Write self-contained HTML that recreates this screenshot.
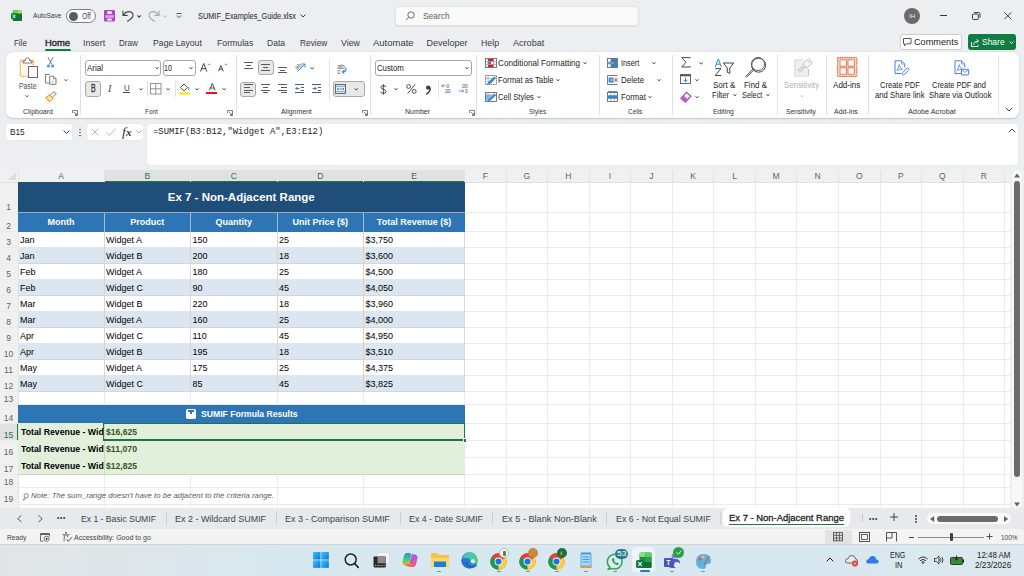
<!DOCTYPE html><html><head><meta charset="utf-8"><style>
*{margin:0;padding:0;box-sizing:border-box}
html,body{width:1024px;height:576px;overflow:hidden;background:#eceef1;font-family:"Liberation Sans",sans-serif;position:relative}
.a{position:absolute}
.t{position:absolute;white-space:nowrap;line-height:0;height:0}
.t>span{display:inline-block}
svg{position:absolute;overflow:visible}
</style></head><body>
<svg style="left:10.5px;top:10.3px" width="11" height="11" viewBox="0 0 11 11"><rect x="1.8" y="0" width="9.2" height="11" rx="1" fill="#1b6f35"/><rect x="1.8" y="0" width="4.6" height="3.5" rx="0.6" fill="#5fd45a"/><rect x="6.4" y="0" width="4.6" height="3.5" rx="0.6" fill="#a8e05a"/><rect x="0" y="3.2" width="6" height="6" rx="0.7" fill="#0f7a38"/><path d="M1.5 4.6 L4.5 8 M4.5 4.6 L1.5 8" stroke="#fff" stroke-width="0.9"/></svg>
<div class="t" style="left:32.50px;top:16px;font-size:8px;color:#3b3b3b;font-weight:normal;font-family:'Liberation Sans', sans-serif;transform:scaleX(0.8201);transform-origin:0 0;">AutoSave</div>
<div class="a" style="left:66px;top:9px;width:30px;height:14px;border:1px solid #7d7d7d;border-radius:7px;background:#fff"></div>
<div class="a" style="left:68.5px;top:11.5px;width:9px;height:9px;border-radius:50%;background:#5c5c5c"></div>
<div class="t" style="left:82.00px;top:16px;font-size:8.5px;color:#4a4a4a;font-weight:normal;font-family:'Liberation Sans', sans-serif;transform:scaleX(0.8000);transform-origin:0 0;">Off</div>
<svg style="left:104px;top:10px" width="11" height="11.5" viewBox="0 0 11 11.5"><rect x="0" y="0" width="11" height="11.5" rx="1.2" fill="#b146c2"/><rect x="3.3" y="1.3" width="4.4" height="2.6" fill="#fff"/><rect x="1.3" y="5.2" width="8.4" height="2.6" fill="#dba6e6"/><rect x="3.3" y="8.6" width="4.4" height="2" fill="#fff"/></svg>
<svg style="left:122px;top:10px" width="12" height="12" viewBox="0 0 12 12"><path d="M1 0.8 V5.4 H5.6" fill="none" stroke="#424242" stroke-width="1.1"/><path d="M1.3 5.2 Q3.5 1.5 7.2 1.6 Q11 2 11 5.6 Q10.8 8 5.2 11.5" fill="none" stroke="#424242" stroke-width="1.1"/></svg>
<svg style="left:137.3px;top:14.5px" width="4.2" height="2.8" viewBox="0 0 4.2 2.8"><path d="M0.4 0.4 L2.1 2.3 L3.8 0.4" fill="none" stroke="#424242" stroke-width="1.1"/></svg>
<svg style="left:148px;top:10px" width="12" height="12" viewBox="0 0 12 12"><path d="M11 0.8 V5.4 H6.4" fill="none" stroke="#a8a8a8" stroke-width="1.1"/><path d="M10.7 5.2 Q8.5 1.5 4.8 1.6 Q1 2 1 5.6 Q1.2 8 6.8 11.5" fill="none" stroke="#a8a8a8" stroke-width="1.1"/></svg>
<svg style="left:163px;top:14.5px" width="4.2" height="2.8" viewBox="0 0 4.2 2.8"><path d="M0.4 0.4 L2.1 2.3 L3.8 0.4" fill="none" stroke="#b8b8b8" stroke-width="1"/></svg>
<svg style="left:176px;top:13px" width="6" height="6" viewBox="0 0 6 6"><path d="M0.5 0.5 H5.5" stroke="#424242" stroke-width="0.9"/><path d="M0.8 2.5 L3 4.7 L5.2 2.5" fill="none" stroke="#424242" stroke-width="0.9"/></svg>
<div class="t" style="left:197.80px;top:16.3px;font-size:8.5px;color:#242424;font-weight:normal;font-family:'Liberation Sans', sans-serif;transform:scaleX(0.8664);transform-origin:0 0;">SUMIF_Examples_Guide.xlsx</div>
<svg style="left:299.6px;top:14px" width="6" height="4" viewBox="0 0 6 4"><path d="M0.5 0.5 L3 3 L5.5 0.5" fill="none" stroke="#424242" stroke-width="1"/></svg>
<div class="a" style="left:394.6px;top:5.6px;width:244.6px;height:20.6px;border-radius:4px;background:#fafafa;border:1px solid #e2e3e6;box-shadow:0 1px 1px rgba(0,0,0,0.08)"></div>
<svg style="left:405px;top:11px" width="10" height="10" viewBox="0 0 10 10"><circle cx="6" cy="4" r="3.2" fill="none" stroke="#616161" stroke-width="0.9"/><path d="M3.7 6.3 L0.8 9.2" stroke="#616161" stroke-width="0.9"/></svg>
<div class="t" style="left:422.50px;top:15.6px;font-size:9px;color:#616161;font-weight:normal;font-family:'Liberation Sans', sans-serif;transform:scaleX(0.9333);transform-origin:0 0;">Search</div>
<div class="a" style="left:904px;top:8px;width:16px;height:16px;border-radius:50%;background:#6e6966"></div>
<div class="t" style="left:909.00px;top:16px;font-size:6px;color:#f0f0f0;font-weight:normal;font-family:'Liberation Sans', sans-serif;transform:scaleX(1.0167);transform-origin:0 0;">IH</div>
<div class="a" style="left:940.4px;top:15px;width:6.8px;height:1px;background:#333"></div>
<svg style="left:972px;top:12px" width="8.5" height="8" viewBox="0 0 8.5 8"><rect x="0.5" y="2" width="5.8" height="5.5" rx="1" fill="none" stroke="#333" stroke-width="0.95"/><path d="M2.2 0.5 H6.5 Q8 0.5 8 2 V5.8" fill="none" stroke="#333" stroke-width="0.95"/></svg>
<svg style="left:1004.2px;top:12.2px" width="7.6" height="7.6" viewBox="0 0 7.6 7.6"><path d="M0.4 0.4 L7.2 7.2 M7.2 0.4 L0.4 7.2" stroke="#333" stroke-width="0.95"/></svg>
<div class="t" style="left:14.20px;top:42.8px;font-size:9px;color:#3b3b3b;font-weight:normal;font-family:'Liberation Sans', sans-serif;transform:scaleX(0.8828);transform-origin:0 0;">File</div>
<div class="t" style="left:45.00px;top:42.8px;font-size:9px;color:#242424;font-weight:normal;-webkit-text-stroke:0.35px #242424;font-family:'Liberation Sans', sans-serif;transform:scaleX(1.0417);transform-origin:0 0;">Home</div>
<div class="t" style="left:82.80px;top:42.8px;font-size:9px;color:#3b3b3b;font-weight:normal;font-family:'Liberation Sans', sans-serif;transform:scaleX(0.9867);transform-origin:0 0;">Insert</div>
<div class="t" style="left:119.40px;top:42.8px;font-size:9px;color:#3b3b3b;font-weight:normal;font-family:'Liberation Sans', sans-serif;transform:scaleX(0.8988);transform-origin:0 0;">Draw</div>
<div class="t" style="left:153.30px;top:42.8px;font-size:9px;color:#3b3b3b;font-weight:normal;font-family:'Liberation Sans', sans-serif;transform:scaleX(0.9663);transform-origin:0 0;">Page Layout</div>
<div class="t" style="left:216.60px;top:42.8px;font-size:9px;color:#3b3b3b;font-weight:normal;font-family:'Liberation Sans', sans-serif;transform:scaleX(0.9680);transform-origin:0 0;">Formulas</div>
<div class="t" style="left:266.60px;top:42.8px;font-size:9px;color:#3b3b3b;font-weight:normal;font-family:'Liberation Sans', sans-serif;transform:scaleX(0.9455);transform-origin:0 0;">Data</div>
<div class="t" style="left:299.50px;top:42.8px;font-size:9px;color:#3b3b3b;font-weight:normal;font-family:'Liberation Sans', sans-serif;transform:scaleX(0.9244);transform-origin:0 0;">Review</div>
<div class="t" style="left:340.80px;top:42.8px;font-size:9px;color:#3b3b3b;font-weight:normal;font-family:'Liberation Sans', sans-serif;transform:scaleX(0.9795);transform-origin:0 0;">View</div>
<div class="t" style="left:372.90px;top:42.8px;font-size:9px;color:#3b3b3b;font-weight:normal;font-family:'Liberation Sans', sans-serif;transform:scaleX(1.0545);transform-origin:0 0;">Automate</div>
<div class="t" style="left:426.50px;top:42.8px;font-size:9px;color:#3b3b3b;font-weight:normal;font-family:'Liberation Sans', sans-serif;transform:scaleX(1.0000);transform-origin:0 0;">Developer</div>
<div class="t" style="left:481.30px;top:42.8px;font-size:9px;color:#3b3b3b;font-weight:normal;font-family:'Liberation Sans', sans-serif;transform:scaleX(0.9730);transform-origin:0 0;">Help</div>
<div class="t" style="left:512.80px;top:42.8px;font-size:9px;color:#3b3b3b;font-weight:normal;font-family:'Liberation Sans', sans-serif;transform:scaleX(1.0065);transform-origin:0 0;">Acrobat</div>
<div class="a" style="left:45px;top:49px;width:26px;height:2px;background:#107c41;border-radius:1px"></div>
<div class="a" style="left:900.2px;top:34.3px;width:62px;height:15.4px;border:1px solid #cdcdcd;border-radius:3px;background:#fff"></div>
<svg style="left:903px;top:38px" width="8.5" height="8.5" viewBox="0 0 8.5 8.5"><path d="M0.5 0.5 H8 V5.8 H3.5 L1.5 7.8 V5.8 H0.5 Z" fill="none" stroke="#424242" stroke-width="0.9"/></svg>
<div class="t" style="left:913.70px;top:42.3px;font-size:9px;color:#242424;font-weight:normal;font-family:'Liberation Sans', sans-serif;transform:scaleX(1.0184);transform-origin:0 0;">Comments</div>
<div class="a" style="left:968.1px;top:34.3px;width:47.9px;height:15.4px;border-radius:3px;background:#107c41"></div>
<svg style="left:970.7px;top:37.5px" width="9" height="9" viewBox="0 0 9 9"><path d="M0.5 4 V8.5 H7 V6.8" fill="none" stroke="#fff" stroke-width="0.9"/><path d="M2.5 6.8 Q2.8 3.2 7 3 M5.6 1.2 L7.6 3 L5.6 4.8" fill="none" stroke="#fff" stroke-width="0.9"/></svg>
<div class="t" style="left:982.00px;top:42.3px;font-size:9px;color:#fff;font-weight:normal;font-family:'Liberation Sans', sans-serif;transform:scaleX(0.9417);transform-origin:0 0;">Share</div>
<svg style="left:1009px;top:41px" width="5" height="3" viewBox="0 0 5 3"><path d="M0.5 0.5 L2.5 2.5 L4.5 0.5" fill="none" stroke="#fff" stroke-width="0.9"/></svg>
<div class="a" style="left:5.5px;top:52px;width:1013px;height:66px;background:#fff;border-radius:7px;box-shadow:0 0.5px 1.5px rgba(0,0,0,0.18)"></div>
<div class="a" style="left:79.5px;top:55px;width:1px;height:60px;background:#e1e1e1"></div>
<div class="a" style="left:235.5px;top:55px;width:1px;height:60px;background:#e1e1e1"></div>
<div class="a" style="left:369.5px;top:55px;width:1px;height:60px;background:#e1e1e1"></div>
<div class="a" style="left:476px;top:55px;width:1px;height:60px;background:#e1e1e1"></div>
<div class="a" style="left:599px;top:55px;width:1px;height:60px;background:#e1e1e1"></div>
<div class="a" style="left:671.5px;top:55px;width:1px;height:60px;background:#e1e1e1"></div>
<div class="a" style="left:777px;top:55px;width:1px;height:60px;background:#e1e1e1"></div>
<div class="a" style="left:826px;top:55px;width:1px;height:60px;background:#e1e1e1"></div>
<div class="a" style="left:867.5px;top:55px;width:1px;height:60px;background:#e1e1e1"></div>
<div class="a" style="left:997.5px;top:55px;width:1px;height:60px;background:#e1e1e1"></div>
<div class="t" style="left:23.00px;top:112px;font-size:8px;color:#333333;font-weight:normal;font-family:'Liberation Sans', sans-serif;transform:scaleX(0.8759);transform-origin:0 0;">Clipboard</div>
<div class="t" style="left:144.80px;top:112px;font-size:8px;color:#333333;font-weight:normal;font-family:'Liberation Sans', sans-serif;transform:scaleX(0.8000);transform-origin:0 0;">Font</div>
<div class="t" style="left:281.00px;top:112px;font-size:8px;color:#333333;font-weight:normal;font-family:'Liberation Sans', sans-serif;transform:scaleX(0.8648);transform-origin:0 0;">Alignment</div>
<div class="t" style="left:404.90px;top:112px;font-size:8px;color:#333333;font-weight:normal;font-family:'Liberation Sans', sans-serif;transform:scaleX(0.8842);transform-origin:0 0;">Number</div>
<div class="t" style="left:528.70px;top:112px;font-size:8px;color:#333333;font-weight:normal;font-family:'Liberation Sans', sans-serif;transform:scaleX(0.7816);transform-origin:0 0;">Styles</div>
<div class="t" style="left:627.70px;top:112px;font-size:8px;color:#333333;font-weight:normal;font-family:'Liberation Sans', sans-serif;transform:scaleX(0.8056);transform-origin:0 0;">Cells</div>
<div class="t" style="left:712.90px;top:112px;font-size:8px;color:#333333;font-weight:normal;font-family:'Liberation Sans', sans-serif;transform:scaleX(0.8510);transform-origin:0 0;">Editing</div>
<div class="t" style="left:786.00px;top:112px;font-size:8px;color:#333333;font-weight:normal;font-family:'Liberation Sans', sans-serif;transform:scaleX(0.8278);transform-origin:0 0;">Sensitivity</div>
<div class="t" style="left:834.00px;top:112px;font-size:8px;color:#333333;font-weight:normal;font-family:'Liberation Sans', sans-serif;transform:scaleX(0.8807);transform-origin:0 0;">Add-ins</div>
<div class="t" style="left:908.00px;top:112px;font-size:8px;color:#333333;font-weight:normal;font-family:'Liberation Sans', sans-serif;transform:scaleX(0.9105);transform-origin:0 0;">Adobe Acrobat</div>
<svg style="left:72px;top:110px" width="6" height="6" viewBox="0 0 6 6"><path d="M0.5 3 V0.5 H5.5 V5.5 H3" fill="none" stroke="#616161" stroke-width="0.8"/><path d="M2 2 L5 5 M5 3 V5 H3" fill="none" stroke="#616161" stroke-width="0.8"/></svg>
<svg style="left:227px;top:110px" width="6" height="6" viewBox="0 0 6 6"><path d="M0.5 3 V0.5 H5.5 V5.5 H3" fill="none" stroke="#616161" stroke-width="0.8"/><path d="M2 2 L5 5 M5 3 V5 H3" fill="none" stroke="#616161" stroke-width="0.8"/></svg>
<svg style="left:362px;top:110px" width="6" height="6" viewBox="0 0 6 6"><path d="M0.5 3 V0.5 H5.5 V5.5 H3" fill="none" stroke="#616161" stroke-width="0.8"/><path d="M2 2 L5 5 M5 3 V5 H3" fill="none" stroke="#616161" stroke-width="0.8"/></svg>
<svg style="left:469px;top:110px" width="6" height="6" viewBox="0 0 6 6"><path d="M0.5 3 V0.5 H5.5 V5.5 H3" fill="none" stroke="#616161" stroke-width="0.8"/><path d="M2 2 L5 5 M5 3 V5 H3" fill="none" stroke="#616161" stroke-width="0.8"/></svg>
<svg style="left:19px;top:57px" width="20" height="21" viewBox="0 0 20 21"><rect x="1.3" y="3.3" width="13" height="16" rx="1" fill="#fffaf0" stroke="#f59d1a" stroke-width="1.1" stroke-dasharray="1.6 0.5"/><path d="M4 6 V4 H6 Q6.3 0.8 8.5 0.8 Q10.7 0.8 11 4 H13 V6 Z" fill="#fff" stroke="#6b6b6b" stroke-width="0.9"/><rect x="9.5" y="9.5" width="9" height="11" fill="#f8f8f8" stroke="#6b6b6b" stroke-width="1"/></svg>
<div class="t" style="left:18.50px;top:86.2px;font-size:8.5px;color:#505050;font-weight:normal;font-family:'Liberation Sans', sans-serif;transform:scaleX(0.8046);transform-origin:0 0;">Paste</div>
<svg style="left:24.9px;top:94.9px" width="4" height="2.20" viewBox="0 0 4 2.20"><path d="M0.5 0.5 L2.00 1.70 L3.50 0.5" fill="none" stroke="#505050" stroke-width="1"/></svg>
<svg style="left:46px;top:57px" width="9" height="11" viewBox="0 0 9 11"><path d="M2 0.3 L5.8 7.5 M7 0.3 L3.2 7.5" stroke="#6b6b6b" stroke-width="0.9"/><circle cx="2.4" cy="9" r="1.5" fill="#3a96dd"/><circle cx="6.6" cy="9" r="1.5" fill="#3a96dd"/></svg>
<svg style="left:44.5px;top:74px" width="12" height="11" viewBox="0 0 12 11"><path d="M4.7 9 H0.5 V0.5 H4.7" fill="#fff" stroke="#6b6b6b" stroke-width="0.9"/><path d="M4.7 2.2 H8.5 L11 4.7 V10.3 H4.7 Z" fill="#fff" stroke="#6b6b6b" stroke-width="0.9"/><path d="M8.5 2.2 V4.7 H11" fill="none" stroke="#6b6b6b" stroke-width="0.7"/><rect x="6.5" y="7" width="2" height="1.5" fill="#bbb"/></svg>
<svg style="left:64.4px;top:78.8px" width="4" height="2.20" viewBox="0 0 4 2.20"><path d="M0.5 0.5 L2.00 1.70 L3.50 0.5" fill="none" stroke="#505050" stroke-width="1"/></svg>
<svg style="left:44.5px;top:91px" width="12" height="11" viewBox="0 0 12 11"><path d="M1 6.8 L4.8 3.6 L8 7.4 L4.2 10.4 Z" fill="#fff" stroke="#f59d1a" stroke-width="1.2"/><path d="M2.8 8.4 L6.2 5.2" stroke="#f59d1a" stroke-width="0.8"/><path d="M5.6 3.6 L9.2 0.6 L11.2 2.8 L7.6 6" fill="#fff" stroke="#6b6b6b" stroke-width="0.9"/></svg>
<div class="a" style="left:85px;top:59.5px;width:75.5px;height:16px;border:1px solid #a8a8a8;border-radius:3px;background:#fff"></div>
<div class="t" style="left:86.60px;top:68px;font-size:8.5px;color:#242424;font-weight:normal;font-family:'Liberation Sans', sans-serif;transform:scaleX(0.9471);transform-origin:0 0;">Arial</div>
<svg style="left:155px;top:66.9px" width="4" height="2.20" viewBox="0 0 4 2.20"><path d="M0.5 0.5 L2.00 1.70 L3.50 0.5" fill="none" stroke="#424242" stroke-width="1"/></svg>
<div class="a" style="left:162.5px;top:59.5px;width:33px;height:16px;border:1px solid #a8a8a8;border-radius:3px;background:#fff"></div>
<div class="t" style="left:164.40px;top:68px;font-size:8.5px;color:#242424;font-weight:normal;font-family:'Liberation Sans', sans-serif;transform:scaleX(0.8211);transform-origin:0 0;">10</div>
<svg style="left:189.4px;top:66.9px" width="4" height="2.20" viewBox="0 0 4 2.20"><path d="M0.5 0.5 L2.00 1.70 L3.50 0.5" fill="none" stroke="#424242" stroke-width="1"/></svg>
<svg style="left:200px;top:62.5px" width="8" height="9" viewBox="0 0 8 9"><path d="M0.5 8.5 L3.7 0.5 L6.9 8.5 M1.7 5.7 H5.7" fill="none" stroke="#424242" stroke-width="1"/></svg>
<svg style="left:206.8px;top:62.8px" width="4" height="3" viewBox="0 0 4 3"><path d="M0.5 2.3 L2 0.8 L3.5 2.3" fill="none" stroke="#2b88d8" stroke-width="0.8"/></svg>
<svg style="left:218.2px;top:64.8px" width="6" height="7" viewBox="0 0 6 7"><path d="M0.5 6.3 L2.9 0.5 L5.3 6.3 M1.4 4.2 H4.4" fill="none" stroke="#424242" stroke-width="0.95"/></svg>
<svg style="left:223.6px;top:62.8px" width="4" height="3" viewBox="0 0 4 3"><path d="M0.5 0.7 L2 2.2 L3.5 0.7" fill="none" stroke="#2b88d8" stroke-width="0.8"/></svg>
<div class="a" style="left:85px;top:81px;width:16px;height:16px;border:1px solid #a9a9a9;border-radius:3px;background:#e8e8e8"></div>
<div class="t" style="left:90.70px;top:89.3px;font-size:10px;color:#333;font-weight:normal;-webkit-text-stroke:0.3px #333;font-family:'Liberation Sans', sans-serif;transform:scaleX(0.6963);transform-origin:0 0;">B</div>
<div class="t" style="left:108.06px;top:88.6px;font-size:10px;color:#424242;font-weight:normal;font-style:italic;font-family:'Liberation Serif', serif;transform:scaleX(1.0250);transform-origin:0 0;">I</div>
<div class="t" style="left:123.60px;top:88.3px;font-size:9.5px;color:#424242;font-weight:normal;font-family:'Liberation Sans', sans-serif;transform:scaleX(0.8296);transform-origin:0 0;">U</div>
<div class="a" style="left:123.3px;top:92.4px;width:6.7px;height:0.9px;background:#424242"></div>
<svg style="left:138.5px;top:87.9px" width="4.2" height="2.31" viewBox="0 0 4.2 2.31"><path d="M0.5 0.5 L2.10 1.81 L3.70 0.5" fill="none" stroke="#424242" stroke-width="1"/></svg>
<div class="a" style="left:146.5px;top:81px;width:1px;height:16px;background:#e1e1e1"></div>
<svg style="left:150px;top:83px" width="12" height="12" viewBox="0 0 12 12"><rect x="0.5" y="0.5" width="10.5" height="10.5" fill="none" stroke="#8a8a8a" stroke-width="0.9"/><path d="M5.75 0.5 V11 M0.5 5.75 H11" stroke="#8a8a8a" stroke-width="0.9"/></svg>
<svg style="left:166.2px;top:87.9px" width="4.2" height="2.31" viewBox="0 0 4.2 2.31"><path d="M0.5 0.5 L2.10 1.81 L3.70 0.5" fill="none" stroke="#424242" stroke-width="1"/></svg>
<div class="a" style="left:175px;top:81px;width:1px;height:16px;background:#e1e1e1"></div>
<svg style="left:179px;top:82px" width="12" height="13" viewBox="0 0 12 13"><path d="M1.5 5.5 L5 2 L8.5 5.5 L5 9 Z" fill="#fff" stroke="#424242" stroke-width="0.9"/><path d="M9 5 Q10.5 6.5 9.8 8" fill="none" stroke="#2b88d8" stroke-width="1"/><rect x="0" y="10.5" width="11" height="2" fill="#ffe600"/></svg>
<svg style="left:195.1px;top:87.9px" width="4.2" height="2.31" viewBox="0 0 4.2 2.31"><path d="M0.5 0.5 L2.10 1.81 L3.70 0.5" fill="none" stroke="#424242" stroke-width="1"/></svg>
<svg style="left:208.6px;top:83.4px" width="7" height="8" viewBox="0 0 7 8"><path d="M0.5 7.2 L3.3 0.4 L6.1 7.2 M1.5 5 H5.1" fill="none" stroke="#424242" stroke-width="0.95"/></svg>
<div class="a" style="left:206px;top:91.6px;width:11px;height:2.6px;background:#e81123"></div>
<svg style="left:222.3px;top:87.9px" width="4.2" height="2.31" viewBox="0 0 4.2 2.31"><path d="M0.5 0.5 L2.10 1.81 L3.70 0.5" fill="none" stroke="#424242" stroke-width="1"/></svg>
<div class="a" style="left:244px;top:62.0px;width:9px;height:1px;background:#5a5a5a"></div>
<div class="a" style="left:246px;top:64.85px;width:5px;height:1px;background:#5a5a5a"></div>
<div class="a" style="left:244px;top:67.7px;width:9px;height:1px;background:#5a5a5a"></div>
<div class="a" style="left:257.5px;top:59.7px;width:16px;height:15.8px;border:1px solid #a9a9a9;border-radius:3px;background:#e8e8e8"></div>
<div class="a" style="left:261px;top:64.0px;width:9px;height:1px;background:#5a5a5a"></div>
<div class="a" style="left:263px;top:66.9px;width:5px;height:1px;background:#5a5a5a"></div>
<div class="a" style="left:261px;top:69.8px;width:9px;height:1px;background:#5a5a5a"></div>
<div class="a" style="left:278px;top:66.8px;width:9px;height:1px;background:#5a5a5a"></div>
<div class="a" style="left:280px;top:69.55px;width:5px;height:1px;background:#5a5a5a"></div>
<div class="a" style="left:278px;top:72.3px;width:9px;height:1px;background:#5a5a5a"></div>
<svg style="left:294px;top:61px" width="12" height="12" viewBox="0 0 12 12"><text x="0.5" y="8" font-size="6.5" fill="#6b6b6b" font-family="Liberation Sans" transform="rotate(-40 3.5 5.5)">ab</text><path d="M3.5 10.5 L10.5 3.5 M7.5 3 H11 V6.5" fill="none" stroke="#2b88d8" stroke-width="1"/></svg>
<svg style="left:309.5px;top:66.5px" width="4.5" height="2.48" viewBox="0 0 4.5 2.48"><path d="M0.5 0.5 L2.25 1.98 L4.00 0.5" fill="none" stroke="#424242" stroke-width="1"/></svg>
<div class="a" style="left:240.2px;top:81.5px;width:16.3px;height:15.5px;border:1px solid #a9a9a9;border-radius:3px;background:#e8e8e8"></div>
<div class="a" style="left:244px;top:84.2px;width:9px;height:1px;background:#5a5a5a"></div>
<div class="a" style="left:244px;top:86.9px;width:6px;height:1px;background:#5a5a5a"></div>
<div class="a" style="left:244px;top:89.60000000000001px;width:9px;height:1px;background:#5a5a5a"></div>
<div class="a" style="left:244px;top:92.30000000000001px;width:6px;height:1px;background:#5a5a5a"></div>
<div class="a" style="left:261px;top:84.2px;width:9px;height:1px;background:#5a5a5a"></div>
<div class="a" style="left:263px;top:86.9px;width:5px;height:1px;background:#5a5a5a"></div>
<div class="a" style="left:261px;top:89.60000000000001px;width:9px;height:1px;background:#5a5a5a"></div>
<div class="a" style="left:263px;top:92.30000000000001px;width:5px;height:1px;background:#5a5a5a"></div>
<div class="a" style="left:278px;top:84.2px;width:9px;height:1px;background:#5a5a5a"></div>
<div class="a" style="left:281px;top:86.9px;width:6px;height:1px;background:#5a5a5a"></div>
<div class="a" style="left:278px;top:89.60000000000001px;width:9px;height:1px;background:#5a5a5a"></div>
<div class="a" style="left:281px;top:92.30000000000001px;width:6px;height:1px;background:#5a5a5a"></div>
<div class="a" style="left:295px;top:84.2px;width:9px;height:1px;background:#5a5a5a"></div>
<div class="a" style="left:301px;top:86.9px;width:3px;height:1px;background:#5a5a5a"></div>
<div class="a" style="left:301px;top:89.60000000000001px;width:3px;height:1px;background:#5a5a5a"></div>
<div class="a" style="left:295px;top:92.30000000000001px;width:9px;height:1px;background:#5a5a5a"></div>
<svg style="left:295px;top:86px" width="5" height="5" viewBox="0 0 5 5"><path d="M4.5 2.5 H0.8 M2.3 1 L0.8 2.5 L2.3 4" fill="none" stroke="#2b88d8" stroke-width="1"/></svg>
<div class="a" style="left:312px;top:84.2px;width:9px;height:1px;background:#5a5a5a"></div>
<div class="a" style="left:318px;top:86.9px;width:3px;height:1px;background:#5a5a5a"></div>
<div class="a" style="left:318px;top:89.60000000000001px;width:3px;height:1px;background:#5a5a5a"></div>
<div class="a" style="left:312px;top:92.30000000000001px;width:9px;height:1px;background:#5a5a5a"></div>
<svg style="left:312px;top:86px" width="5" height="5" viewBox="0 0 5 5"><path d="M0.5 2.5 H4.2 M2.7 1 L4.2 2.5 L2.7 4" fill="none" stroke="#2b88d8" stroke-width="1"/></svg>
<div class="a" style="left:328.5px;top:59px;width:1px;height:42px;background:#e1e1e1"></div>
<svg style="left:336.5px;top:62.5px" width="11" height="11" viewBox="0 0 11 11"><text x="0.2" y="5.6" font-size="6.8" fill="#5a5a5a" font-family="Liberation Sans">ab</text><text x="0.2" y="10.6" font-size="6.8" fill="#5a5a5a" font-family="Liberation Sans">c</text><path d="M8.8 4.6 Q9.8 9 5.6 9 M7.2 7.4 L5.5 9 L7.2 10.6" fill="none" stroke="#2b88d8" stroke-width="1.1"/></svg>
<div class="a" style="left:333px;top:81px;width:31.5px;height:16px;border:1px solid #a9a9a9;border-radius:3px;background:#e8e8e8"></div>
<svg style="left:335px;top:83.5px" width="11" height="10" viewBox="0 0 11 10"><rect x="0.5" y="0.5" width="10" height="9" fill="#cfe4fa" stroke="#5a5a5a" stroke-width="0.9"/><path d="M0.5 2.8 H10.5 M0.5 7.2 H10.5" stroke="#5a5a5a" stroke-width="0.6"/><rect x="1" y="3.2" width="9" height="3.6" fill="#fff"/><path d="M2 5 H9 M3.4 3.8 L2 5 L3.4 6.2 M7.6 3.8 L9 5 L7.6 6.2" fill="none" stroke="#2b88d8" stroke-width="0.9"/></svg>
<svg style="left:354px;top:88.3px" width="4.5" height="2.48" viewBox="0 0 4.5 2.48"><path d="M0.5 0.5 L2.25 1.98 L4.00 0.5" fill="none" stroke="#424242" stroke-width="1"/></svg>
<div class="a" style="left:375px;top:60px;width:96.5px;height:15.5px;border:1px solid #a8a8a8;border-radius:3px;background:#fff"></div>
<div class="t" style="left:376.90px;top:68.2px;font-size:8.5px;color:#242424;font-weight:normal;font-family:'Liberation Sans', sans-serif;transform:scaleX(0.9162);transform-origin:0 0;">Custom</div>
<svg style="left:465.4px;top:67px" width="4" height="2.20" viewBox="0 0 4 2.20"><path d="M0.5 0.5 L2.00 1.70 L3.50 0.5" fill="none" stroke="#424242" stroke-width="1"/></svg>
<svg style="left:380px;top:83.5px" width="7" height="11" viewBox="0 0 7 11"><path d="M5.8 3.2 Q5.6 1.6 3.4 1.6 Q1 1.6 1 3.4 Q1 4.8 3.4 5.4 Q6 6 6 7.6 Q6 9.4 3.4 9.4 Q1 9.4 0.8 7.6" fill="none" stroke="#424242" stroke-width="0.95"/><path d="M3.4 0.2 V10.8" stroke="#424242" stroke-width="0.9"/></svg>
<svg style="left:394px;top:88px" width="4" height="2.20" viewBox="0 0 4 2.20"><path d="M0.5 0.5 L2.00 1.70 L3.50 0.5" fill="none" stroke="#424242" stroke-width="1"/></svg>
<svg style="left:405.5px;top:84px" width="11" height="10" viewBox="0 0 11 10"><circle cx="2.6" cy="2.5" r="1.9" fill="none" stroke="#424242" stroke-width="0.95"/><circle cx="8.2" cy="7.4" r="1.9" fill="none" stroke="#424242" stroke-width="0.95"/><path d="M9.2 0.4 L1.6 9.6" stroke="#424242" stroke-width="0.95"/></svg>
<svg style="left:424.5px;top:84.5px" width="6" height="10" viewBox="0 0 6 10"><circle cx="3.2" cy="2.6" r="2.2" fill="#424242"/><path d="M5.2 2.8 Q5.6 7 1.2 9.2" fill="none" stroke="#424242" stroke-width="1.4"/></svg>
<div class="a" style="left:437.5px;top:81px;width:1px;height:16px;background:#e1e1e1"></div>
<svg style="left:441px;top:83px" width="11" height="11" viewBox="0 0 11 11"><text x="5.5" y="4.5" font-size="4.8" fill="#424242" font-family="Liberation Sans">0</text><text x="3" y="10" font-size="4.8" fill="#424242" font-family="Liberation Sans">.00</text><path d="M4.8 2.8 H0.6 M2.2 1.2 L0.6 2.8 L2.2 4.4" fill="none" stroke="#2b88d8" stroke-width="0.8"/></svg>
<svg style="left:458px;top:83px" width="11" height="11" viewBox="0 0 11 11"><text x="3" y="4.5" font-size="4.8" fill="#424242" font-family="Liberation Sans">.00</text><text x="7" y="10" font-size="4.8" fill="#424242" font-family="Liberation Sans">0</text><path d="M0.6 8 H5.6 M4 6.4 L5.6 8 L4 9.6" fill="none" stroke="#2b88d8" stroke-width="0.8"/></svg>
<svg style="left:485px;top:57.5px" width="12" height="10" viewBox="0 0 12 10"><rect x="0.5" y="0.5" width="11" height="9" fill="#fff" stroke="#6b6b6b" stroke-width="0.9"/><rect x="3" y="1" width="5.5" height="2.5" fill="#e81123"/><rect x="3" y="4" width="3" height="2" fill="#2b88d8"/><rect x="3" y="6.5" width="5.5" height="2.5" fill="#e81123"/><path d="M3 0.5 V9.5 M8.7 0.5 V9.5 M0.5 3.7 H11.5 M0.5 6.3 H11.5" stroke="#8a8a8a" stroke-width="0.6"/></svg>
<div class="t" style="left:498.00px;top:62.9px;font-size:8.5px;color:#242424;font-weight:normal;font-family:'Liberation Sans', sans-serif;transform:scaleX(0.9602);transform-origin:0 0;">Conditional Formatting</div>
<svg style="left:583.4px;top:61.8px" width="4" height="2.20" viewBox="0 0 4 2.20"><path d="M0.5 0.5 L2.00 1.70 L3.50 0.5" fill="none" stroke="#424242" stroke-width="1"/></svg>
<svg style="left:485px;top:74.8px" width="12" height="10" viewBox="0 0 12 10"><rect x="0.5" y="0.5" width="11" height="9" fill="#fff" stroke="#6b6b6b" stroke-width="0.9" stroke-dasharray="1.5 0.7"/><path d="M3 0.5 V9.5 M0.5 3.3 H11.5" stroke="#8a8a8a" stroke-width="0.6"/><path d="M2 9.5 L3.5 6.5 L9 2 L10.5 3.5 L6 8.5 Z" fill="#2b88d8"/><path d="M9 1.5 L11 3.5" stroke="#6b6b6b" stroke-width="1"/></svg>
<div class="t" style="left:498.00px;top:79.7px;font-size:8.5px;color:#242424;font-weight:normal;font-family:'Liberation Sans', sans-serif;transform:scaleX(0.9136);transform-origin:0 0;">Format as Table</div>
<svg style="left:556px;top:78.6px" width="4" height="2.20" viewBox="0 0 4 2.20"><path d="M0.5 0.5 L2.00 1.70 L3.50 0.5" fill="none" stroke="#424242" stroke-width="1"/></svg>
<svg style="left:485px;top:91.8px" width="12" height="10" viewBox="0 0 12 10"><rect x="0.5" y="0.5" width="11" height="9" fill="#fff" stroke="#6b6b6b" stroke-width="0.9"/><path d="M0.5 2.8 H11.5 M3 0.5 V9.5" stroke="#8a8a8a" stroke-width="0.6"/><path d="M1 9 V3 H8 Z" fill="#7fb8ee"/><path d="M2 9.5 L3.5 7 L9 2.2 L10.5 3.7 L5.5 8.5 Z" fill="#2b88d8"/><path d="M9 1.7 L11 3.7" stroke="#6b6b6b" stroke-width="1"/></svg>
<div class="t" style="left:498.00px;top:96.9px;font-size:8.5px;color:#242424;font-weight:normal;font-family:'Liberation Sans', sans-serif;transform:scaleX(0.8944);transform-origin:0 0;">Cell Styles</div>
<svg style="left:537px;top:95.5px" width="4" height="2.20" viewBox="0 0 4 2.20"><path d="M0.5 0.5 L2.00 1.70 L3.50 0.5" fill="none" stroke="#424242" stroke-width="1"/></svg>
<svg style="left:607px;top:57.5px" width="11" height="10" viewBox="0 0 11 10"><rect x="0.5" y="0.5" width="10" height="9" fill="#fff" stroke="#6b6b6b" stroke-width="0.9"/><rect x="4" y="1" width="6" height="8" fill="#2b88d8"/><path d="M4 0.5 V9.5 M7.2 0.5 V9.5 M0.5 5 H10.5" stroke="#6b6b6b" stroke-width="0.6"/><path d="M7.5 5 H1.3 M3 3.3 L1.3 5 L3 6.7" fill="none" stroke="#2b88d8" stroke-width="1"/><path d="M4.5 5 H7" stroke="#fff" stroke-width="0.6"/></svg>
<div class="t" style="left:621.00px;top:62.9px;font-size:8.5px;color:#242424;font-weight:normal;font-family:'Liberation Sans', sans-serif;transform:scaleX(0.8605);transform-origin:0 0;">Insert</div>
<svg style="left:651.8px;top:61.8px" width="4" height="2.20" viewBox="0 0 4 2.20"><path d="M0.5 0.5 L2.00 1.70 L3.50 0.5" fill="none" stroke="#424242" stroke-width="1"/></svg>
<svg style="left:607px;top:74.8px" width="11" height="10" viewBox="0 0 11 10"><path d="M0.5 0.5 H10.5 M0.5 9.5 H10.5 M0.5 0.5 V9.5" fill="none" stroke="#6b6b6b" stroke-width="0.9"/><path d="M0.5 3 H10.5 M0.5 7 H10.5" stroke="#9a9a9a" stroke-width="0.6"/><circle cx="4" cy="5" r="2.6" fill="#2b88d8"/><path d="M2.5 5 H5.5" stroke="#fff" stroke-width="0.8"/><path d="M7.3 3.5 L10.3 6.5 M10.3 3.5 L7.3 6.5" stroke="#e81123" stroke-width="0.9"/></svg>
<div class="t" style="left:621.00px;top:79.7px;font-size:8.5px;color:#242424;font-weight:normal;font-family:'Liberation Sans', sans-serif;transform:scaleX(0.9388);transform-origin:0 0;">Delete</div>
<svg style="left:656.6px;top:78.6px" width="4" height="2.20" viewBox="0 0 4 2.20"><path d="M0.5 0.5 L2.00 1.70 L3.50 0.5" fill="none" stroke="#424242" stroke-width="1"/></svg>
<svg style="left:607px;top:91.4px" width="11" height="11" viewBox="0 0 11 11"><rect x="0.5" y="1.5" width="10" height="9" fill="#fff" stroke="#6b6b6b" stroke-width="0.9"/><path d="M3.8 1.5 V10.5 M7.2 1.5 V10.5 M0.5 4.5 H10.5 M0.5 7.5 H10.5" stroke="#8a8a8a" stroke-width="0.6"/><rect x="1" y="4.5" width="9" height="3" fill="#2b88d8"/><path d="M1 0.5 H10" stroke="#2b88d8" stroke-width="0.9"/></svg>
<div class="t" style="left:621.00px;top:96.9px;font-size:8.5px;color:#242424;font-weight:normal;font-family:'Liberation Sans', sans-serif;transform:scaleX(0.9222);transform-origin:0 0;">Format</div>
<svg style="left:648.4px;top:95.5px" width="4" height="2.20" viewBox="0 0 4 2.20"><path d="M0.5 0.5 L2.00 1.70 L3.50 0.5" fill="none" stroke="#424242" stroke-width="1"/></svg>
<svg style="left:680.5px;top:57px" width="10" height="11" viewBox="0 0 10 11"><path d="M9.2 1.4 V0.6 H0.8 L5 5.3 L0.8 10 H9.2 V9.2" fill="none" stroke="#424242" stroke-width="0.95" stroke-linejoin="miter"/></svg>
<svg style="left:698.6px;top:61.6px" width="4.5" height="2.48" viewBox="0 0 4.5 2.48"><path d="M0.5 0.5 L2.25 1.98 L4.00 0.5" fill="none" stroke="#424242" stroke-width="1"/></svg>
<svg style="left:680px;top:74.3px" width="11" height="10" viewBox="0 0 11 10"><rect x="0.5" y="0.5" width="10" height="9" fill="#fff" stroke="#5a5a5a" stroke-width="0.9"/><rect x="0.5" y="0.5" width="10" height="1.8" fill="#5a5a5a"/><path d="M5.5 3.5 V7.8 M3.6 5.9 L5.5 7.8 L7.4 5.9" fill="none" stroke="#2b88d8" stroke-width="1"/></svg>
<svg style="left:694.8px;top:78.7px" width="4" height="2.20" viewBox="0 0 4 2.20"><path d="M0.5 0.5 L2.00 1.70 L3.50 0.5" fill="none" stroke="#424242" stroke-width="1"/></svg>
<svg style="left:679.5px;top:90.8px" width="12" height="12" viewBox="0 0 12 12"><path d="M1 7.2 L6.6 1.3 L10.8 5.2 L5.2 11 Z" fill="#fff" stroke="#b146c2" stroke-width="1.3"/><path d="M1 7.2 L3.6 4.5 L7.7 8.3 L5.2 11 Z" fill="#c25ad4"/></svg>
<svg style="left:694.8px;top:95.6px" width="4" height="2.20" viewBox="0 0 4 2.20"><path d="M0.5 0.5 L2.00 1.70 L3.50 0.5" fill="none" stroke="#424242" stroke-width="1"/></svg>
<svg style="left:714px;top:57.5px" width="22" height="19" viewBox="0 0 22 19"><path d="M1.2 9 L4.3 0.8 L7.4 9 M2.3 6.2 H6.3" fill="none" stroke="#2b88d8" stroke-width="1"/><path d="M1.3 10.6 H7 L1.2 17.5 H7.2" fill="none" stroke="#424242" stroke-width="1"/><path d="M9.3 5 H19.8 L15.8 10 V15.4 L13.3 14.4 V10 Z" fill="none" stroke="#424242" stroke-width="1" stroke-linejoin="round"/></svg>
<svg style="left:744.5px;top:56.5px" width="22" height="22" viewBox="0 0 22 22"><circle cx="13.6" cy="8.2" r="7" fill="none" stroke="#424242" stroke-width="1"/><path d="M8.6 13.2 L1.2 20.6" stroke="#424242" stroke-width="1"/></svg>
<div class="t" style="left:713.00px;top:84.8px;font-size:8.5px;color:#242424;font-weight:normal;font-family:'Liberation Sans', sans-serif;transform:scaleX(0.9474);transform-origin:0 0;">Sort &amp;</div>
<div class="t" style="left:712.00px;top:95.3px;font-size:8.5px;color:#242424;font-weight:normal;font-family:'Liberation Sans', sans-serif;transform:scaleX(0.9053);transform-origin:0 0;">Filter</div>
<svg style="left:733.4px;top:94px" width="4" height="2.20" viewBox="0 0 4 2.20"><path d="M0.5 0.5 L2.00 1.70 L3.50 0.5" fill="none" stroke="#424242" stroke-width="1"/></svg>
<svg style="left:744px;top:56px" width="22" height="22" viewBox="0 0 22 22"><circle cx="14" cy="8" r="6.5" fill="none" stroke="#616161" stroke-width="1"/><path d="M9.5 12.5 L1.5 20.5" stroke="#616161" stroke-width="1"/></svg>
<div class="t" style="left:744.10px;top:84.8px;font-size:8.5px;color:#242424;font-weight:normal;font-family:'Liberation Sans', sans-serif;transform:scaleX(0.9374);transform-origin:0 0;">Find &amp;</div>
<div class="t" style="left:741.90px;top:95.3px;font-size:8.5px;color:#242424;font-weight:normal;font-family:'Liberation Sans', sans-serif;transform:scaleX(0.8632);transform-origin:0 0;">Select</div>
<svg style="left:766px;top:94px" width="4" height="2.20" viewBox="0 0 4 2.20"><path d="M0.5 0.5 L2.00 1.70 L3.50 0.5" fill="none" stroke="#424242" stroke-width="1"/></svg>
<svg style="left:793.5px;top:57px" width="20" height="20" viewBox="0 0 20 20"><path d="M1 3 H9 M1 3 V19 H14.5 V12" fill="none" stroke="#c4c4c4" stroke-width="1"/><rect x="1.5" y="3.5" width="12.5" height="15" fill="#efefef"/><path d="M4 14 L10 8 M5.5 15.5 L11.5 9.5" stroke="#c0c0c0" stroke-width="1.6" stroke-dasharray="1 0.6"/><path d="M9 7 L14.5 1.5 L18.5 5.5 L13 11 Z" fill="#f4f4f4" stroke="#c4c4c4" stroke-width="1"/><circle cx="15" cy="4.8" r="0.9" fill="#c4c4c4"/></svg>
<div class="t" style="left:783.75px;top:84.8px;font-size:8.5px;color:#b0b0b0;font-weight:normal;font-family:'Liberation Sans', sans-serif;transform:scaleX(0.9190);transform-origin:0 0;">Sensitivity</div>
<svg style="left:799.8px;top:94.5px" width="4" height="2.20" viewBox="0 0 4 2.20"><path d="M0.5 0.5 L2.00 1.70 L3.50 0.5" fill="none" stroke="#c0c0c0" stroke-width="1"/></svg>
<svg style="left:836.5px;top:57.3px" width="21" height="20" viewBox="0 0 21 20"><rect x="0.6" y="0.6" width="19.2" height="18.8" rx="0.5" fill="#fbe3d6" stroke="#e86a3f" stroke-width="1.1" stroke-dasharray="1.4 0.4"/><rect x="3" y="2.8" width="6.4" height="6.4" fill="#fff" stroke="#e86a3f" stroke-width="0.9"/><rect x="11" y="2.8" width="6.4" height="6.4" fill="#fff" stroke="#e86a3f" stroke-width="0.9"/><rect x="3" y="10.8" width="6.4" height="6.4" fill="#fff" stroke="#e86a3f" stroke-width="0.9"/><rect x="11" y="10.8" width="6.4" height="6.4" fill="#fff" stroke="#e86a3f" stroke-width="0.9"/></svg>
<div class="t" style="left:833.40px;top:84.8px;font-size:8.5px;color:#242424;font-weight:normal;font-family:'Liberation Sans', sans-serif;transform:scaleX(0.9496);transform-origin:0 0;">Add-ins</div>
<svg style="left:893.8px;top:60.3px" width="16" height="16" viewBox="0 0 16 16"><path d="M7.5 13.5 H1 V0.8 H7.5 L10.7 4 V7.5" fill="#fff" stroke="#4a7ee6" stroke-width="1"/><path d="M7.5 0.8 V4 H10.7" fill="none" stroke="#4a7ee6" stroke-width="0.7"/><path d="M3 10.5 Q4.6 8.2 5.2 4.6 Q5.8 8 8.4 9.2 Q5.5 9 3 10.5 Z" fill="none" stroke="#4a7ee6" stroke-width="0.8"/><path d="M8.8 12.6 L12.6 8.4 Q13.8 7.4 14.6 8.4 Q15.3 9.4 14.3 10.4 L10.5 14.6 Q9.4 15.6 8.6 14.7 Q7.9 13.8 8.8 12.6 Z" fill="#fff" stroke="#4a7ee6" stroke-width="1"/></svg>
<svg style="left:954.3px;top:60.3px" width="16" height="16" viewBox="0 0 16 16"><path d="M7.5 13.5 H1 V0.8 H7.5 L10.7 4 V7.5" fill="#fff" stroke="#4a7ee6" stroke-width="1"/><path d="M7.5 0.8 V4 H10.7" fill="none" stroke="#4a7ee6" stroke-width="0.7"/><path d="M3 10.5 Q4.6 8.2 5.2 4.6 Q5.8 8 8.4 9.2 Q5.5 9 3 10.5 Z" fill="none" stroke="#4a7ee6" stroke-width="0.8"/><rect x="7.5" y="9.3" width="7.2" height="5.6" rx="0.6" fill="#fff" stroke="#4a7ee6" stroke-width="1"/><path d="M7.8 9.8 L11.1 12.4 L14.4 9.8" fill="none" stroke="#4a7ee6" stroke-width="0.8"/></svg>
<div class="t" style="left:879.60px;top:84.9px;font-size:8.5px;color:#242424;font-weight:normal;font-family:'Liberation Sans', sans-serif;transform:scaleX(0.8872);transform-origin:0 0;">Create PDF</div>
<div class="t" style="left:874.70px;top:95.2px;font-size:8.5px;color:#242424;font-weight:normal;font-family:'Liberation Sans', sans-serif;transform:scaleX(0.9119);transform-origin:0 0;">and Share link</div>
<div class="t" style="left:932.40px;top:84.9px;font-size:8.5px;color:#242424;font-weight:normal;font-family:'Liberation Sans', sans-serif;transform:scaleX(0.8764);transform-origin:0 0;">Create PDF and</div>
<div class="t" style="left:928.60px;top:95.2px;font-size:8.5px;color:#242424;font-weight:normal;font-family:'Liberation Sans', sans-serif;transform:scaleX(0.9269);transform-origin:0 0;">Share via Outlook</div>
<svg style="left:1005px;top:107px" width="8" height="5" viewBox="0 0 8 5"><path d="M0.7 0.7 L4 4 L7.3 0.7" fill="none" stroke="#424242" stroke-width="1"/></svg>
<div class="a" style="left:6px;top:124px;width:66px;height:15.5px;background:#fff;border-radius:3px;box-shadow:0 0 0 0.5px #e4e4e4"></div>
<div class="t" style="left:9.50px;top:132px;font-size:8.5px;color:#242424;font-weight:normal;font-family:'Liberation Sans', sans-serif;transform:scaleX(0.9667);transform-origin:0 0;">B15</div>
<svg style="left:63px;top:130px" width="7" height="4" viewBox="0 0 7 4"><path d="M0.6 0.6 L3.5 3.4 L6.4 0.6" fill="none" stroke="#424242" stroke-width="1"/></svg>
<div class="a" style="left:79px;top:128.5px;width:1.5px;height:1.5px;background:#616161;border-radius:50%"></div>
<div class="a" style="left:79px;top:131.5px;width:1.5px;height:1.5px;background:#616161;border-radius:50%"></div>
<div class="a" style="left:79px;top:134.5px;width:1.5px;height:1.5px;background:#616161;border-radius:50%"></div>
<div class="a" style="left:87px;top:124px;width:56px;height:15.5px;background:#fff;border-radius:3px;box-shadow:0 0 0 0.5px #e4e4e4"></div>
<svg style="left:91px;top:128px" width="8" height="8" viewBox="0 0 8 8"><path d="M0.5 0.5 L7.5 7.5 M7.5 0.5 L0.5 7.5" stroke="#b0b0b0" stroke-width="0.9"/></svg>
<svg style="left:106px;top:128px" width="10" height="8" viewBox="0 0 10 8"><path d="M0.5 4.5 L3.5 7.5 L9.5 0.5" fill="none" stroke="#b0b0b0" stroke-width="0.9"/></svg>
<div class="t" style="left:121.80px;top:131.8px;font-size:12px;color:#333;font-weight:normal;font-style:italic;font-family:'Liberation Serif', serif;transform:scaleX(1.1657);transform-origin:0 0;"><i>f</i><b style="font-size:9.5px">x</b></div>
<svg style="left:135.7px;top:130.3px" width="6.2" height="3.4" viewBox="0 0 6.2 3.4"><path d="M0.4 0.4 L3.1 3 L5.8 0.4" fill="none" stroke="#9a9a9a" stroke-width="0.9"/></svg>
<div class="a" style="left:147px;top:124px;width:871px;height:41px;background:#fff;border-radius:4px;box-shadow:0 0 0 0.5px #e4e4e4"></div>
<div class="t" style="left:152.80px;top:132px;font-size:9.5px;color:#242424;font-weight:normal;font-family:'Liberation Mono', monospace;transform:scaleX(0.9332);transform-origin:0 0;">=SUMIF(B3:B12,"Widget A",E3:E12)</div>
<svg style="left:1008px;top:128px" width="8" height="5" viewBox="0 0 8 5"><path d="M0.7 4.3 L4 1 L7.3 4.3" fill="none" stroke="#424242" stroke-width="1"/></svg>
<div class="a" style="left:0;top:169.5px;width:1010px;height:338.5px;background:#fff"></div>
<div class="a" style="left:0;top:169.5px;width:1010px;height:12.5px;background:#f0f0f0"></div>
<div class="a" style="left:0;top:182px;width:18px;height:326px;background:#f0f0f0"></div>
<div class="a" style="left:104px;top:169.5px;width:360.5px;height:12.5px;background:#e1e1e1"></div>
<div class="a" style="left:104px;top:180.5px;width:360.5px;height:1.5px;background:#217346"></div>
<div class="a" style="left:0;top:422.9999999999999px;width:18px;height:17.0px;background:#e1e1e1"></div>
<div class="a" style="left:16.5px;top:422.9999999999999px;width:1.5px;height:17.0px;background:#217346"></div>
<div class="a" style="left:103.5px;top:169.5px;width:1px;height:338.5px;background:#ebebeb"></div>
<div class="a" style="left:190.0px;top:169.5px;width:1px;height:338.5px;background:#ebebeb"></div>
<div class="a" style="left:276.5px;top:169.5px;width:1px;height:338.5px;background:#ebebeb"></div>
<div class="a" style="left:363.0px;top:169.5px;width:1px;height:338.5px;background:#ebebeb"></div>
<div class="a" style="left:464.0px;top:169.5px;width:1px;height:338.5px;background:#ebebeb"></div>
<div class="a" style="left:505.55px;top:169.5px;width:1px;height:338.5px;background:#ebebeb"></div>
<div class="a" style="left:547.1px;top:169.5px;width:1px;height:338.5px;background:#ebebeb"></div>
<div class="a" style="left:588.65px;top:169.5px;width:1px;height:338.5px;background:#ebebeb"></div>
<div class="a" style="left:630.1999999999999px;top:169.5px;width:1px;height:338.5px;background:#ebebeb"></div>
<div class="a" style="left:671.7499999999999px;top:169.5px;width:1px;height:338.5px;background:#ebebeb"></div>
<div class="a" style="left:713.2999999999998px;top:169.5px;width:1px;height:338.5px;background:#ebebeb"></div>
<div class="a" style="left:754.8499999999998px;top:169.5px;width:1px;height:338.5px;background:#ebebeb"></div>
<div class="a" style="left:796.3999999999997px;top:169.5px;width:1px;height:338.5px;background:#ebebeb"></div>
<div class="a" style="left:837.9499999999997px;top:169.5px;width:1px;height:338.5px;background:#ebebeb"></div>
<div class="a" style="left:879.4999999999997px;top:169.5px;width:1px;height:338.5px;background:#ebebeb"></div>
<div class="a" style="left:921.0499999999996px;top:169.5px;width:1px;height:338.5px;background:#ebebeb"></div>
<div class="a" style="left:962.5999999999996px;top:169.5px;width:1px;height:338.5px;background:#ebebeb"></div>
<div class="a" style="left:1004.1499999999995px;top:169.5px;width:1px;height:338.5px;background:#ebebeb"></div>
<div class="a" style="left:103.5px;top:170px;width:1px;height:12px;background:#e2e2e2"></div>
<div class="a" style="left:190.0px;top:170px;width:1px;height:12px;background:#e2e2e2"></div>
<div class="a" style="left:276.5px;top:170px;width:1px;height:12px;background:#e2e2e2"></div>
<div class="a" style="left:363.0px;top:170px;width:1px;height:12px;background:#e2e2e2"></div>
<div class="a" style="left:464.0px;top:170px;width:1px;height:12px;background:#e2e2e2"></div>
<div class="a" style="left:505.55px;top:170px;width:1px;height:12px;background:#e2e2e2"></div>
<div class="a" style="left:547.1px;top:170px;width:1px;height:12px;background:#e2e2e2"></div>
<div class="a" style="left:588.65px;top:170px;width:1px;height:12px;background:#e2e2e2"></div>
<div class="a" style="left:630.1999999999999px;top:170px;width:1px;height:12px;background:#e2e2e2"></div>
<div class="a" style="left:671.7499999999999px;top:170px;width:1px;height:12px;background:#e2e2e2"></div>
<div class="a" style="left:713.2999999999998px;top:170px;width:1px;height:12px;background:#e2e2e2"></div>
<div class="a" style="left:754.8499999999998px;top:170px;width:1px;height:12px;background:#e2e2e2"></div>
<div class="a" style="left:796.3999999999997px;top:170px;width:1px;height:12px;background:#e2e2e2"></div>
<div class="a" style="left:837.9499999999997px;top:170px;width:1px;height:12px;background:#e2e2e2"></div>
<div class="a" style="left:879.4999999999997px;top:170px;width:1px;height:12px;background:#e2e2e2"></div>
<div class="a" style="left:921.0499999999996px;top:170px;width:1px;height:12px;background:#e2e2e2"></div>
<div class="a" style="left:962.5999999999996px;top:170px;width:1px;height:12px;background:#e2e2e2"></div>
<div class="a" style="left:1004.1499999999995px;top:170px;width:1px;height:12px;background:#e2e2e2"></div>
<div class="a" style="left:0;top:212.0px;width:1010px;height:1px;background:#ebebeb"></div>
<div class="a" style="left:0;top:231.0px;width:1010px;height:1px;background:#ebebeb"></div>
<div class="a" style="left:0;top:246.95px;width:1010px;height:1px;background:#ebebeb"></div>
<div class="a" style="left:0;top:262.9px;width:1010px;height:1px;background:#ebebeb"></div>
<div class="a" style="left:0;top:278.84999999999997px;width:1010px;height:1px;background:#ebebeb"></div>
<div class="a" style="left:0;top:294.79999999999995px;width:1010px;height:1px;background:#ebebeb"></div>
<div class="a" style="left:0;top:310.74999999999994px;width:1010px;height:1px;background:#ebebeb"></div>
<div class="a" style="left:0;top:326.69999999999993px;width:1010px;height:1px;background:#ebebeb"></div>
<div class="a" style="left:0;top:342.6499999999999px;width:1010px;height:1px;background:#ebebeb"></div>
<div class="a" style="left:0;top:358.5999999999999px;width:1010px;height:1px;background:#ebebeb"></div>
<div class="a" style="left:0;top:374.5499999999999px;width:1010px;height:1px;background:#ebebeb"></div>
<div class="a" style="left:0;top:390.4999999999999px;width:1010px;height:1px;background:#ebebeb"></div>
<div class="a" style="left:0;top:404.1999999999999px;width:1010px;height:1px;background:#ebebeb"></div>
<div class="a" style="left:0;top:422.4999999999999px;width:1010px;height:1px;background:#ebebeb"></div>
<div class="a" style="left:0;top:439.4999999999999px;width:1010px;height:1px;background:#ebebeb"></div>
<div class="a" style="left:0;top:456.4999999999999px;width:1010px;height:1px;background:#ebebeb"></div>
<div class="a" style="left:0;top:473.4999999999999px;width:1010px;height:1px;background:#ebebeb"></div>
<div class="a" style="left:0;top:486.4999999999999px;width:1010px;height:1px;background:#ebebeb"></div>
<div class="a" style="left:0;top:503.9999999999999px;width:1010px;height:1px;background:#ebebeb"></div>
<div class="a" style="left:0;top:181.5px;width:1010px;height:1px;background:#e0e0e0"></div>
<div class="a" style="left:17.5px;top:169.5px;width:1px;height:338.5px;background:#e4e4e4"></div>
<svg style="left:8px;top:172px" width="8" height="8" viewBox="0 0 8 8"><path d="M8 0 V8 H0 Z" fill="#dcdcdc"/></svg>
<div class="t" style="left:18px;width:86px;text-align:center;top:176.4px;font-size:8.5px;color:#616161">A</div>
<div class="t" style="left:104px;width:86.5px;text-align:center;top:176.4px;font-size:8.5px;color:#217346">B</div>
<div class="t" style="left:190.5px;width:86.5px;text-align:center;top:176.4px;font-size:8.5px;color:#217346">C</div>
<div class="t" style="left:277px;width:86.5px;text-align:center;top:176.4px;font-size:8.5px;color:#217346">D</div>
<div class="t" style="left:363.5px;width:101.0px;text-align:center;top:176.4px;font-size:8.5px;color:#217346">E</div>
<div class="t" style="left:464.5px;width:41.55000000000001px;text-align:center;top:176.4px;font-size:8.5px;color:#616161">F</div>
<div class="t" style="left:506.05px;width:41.55000000000001px;text-align:center;top:176.4px;font-size:8.5px;color:#616161">G</div>
<div class="t" style="left:547.6px;width:41.549999999999955px;text-align:center;top:176.4px;font-size:8.5px;color:#616161">H</div>
<div class="t" style="left:589.15px;width:41.549999999999955px;text-align:center;top:176.4px;font-size:8.5px;color:#616161">I</div>
<div class="t" style="left:630.6999999999999px;width:41.549999999999955px;text-align:center;top:176.4px;font-size:8.5px;color:#616161">J</div>
<div class="t" style="left:672.2499999999999px;width:41.549999999999955px;text-align:center;top:176.4px;font-size:8.5px;color:#616161">K</div>
<div class="t" style="left:713.7999999999998px;width:41.549999999999955px;text-align:center;top:176.4px;font-size:8.5px;color:#616161">L</div>
<div class="t" style="left:755.3499999999998px;width:41.549999999999955px;text-align:center;top:176.4px;font-size:8.5px;color:#616161">M</div>
<div class="t" style="left:796.8999999999997px;width:41.549999999999955px;text-align:center;top:176.4px;font-size:8.5px;color:#616161">N</div>
<div class="t" style="left:838.4499999999997px;width:41.549999999999955px;text-align:center;top:176.4px;font-size:8.5px;color:#616161">O</div>
<div class="t" style="left:879.9999999999997px;width:41.549999999999955px;text-align:center;top:176.4px;font-size:8.5px;color:#616161">P</div>
<div class="t" style="left:921.5499999999996px;width:41.549999999999955px;text-align:center;top:176.4px;font-size:8.5px;color:#616161">Q</div>
<div class="t" style="left:963.0999999999996px;width:41.549999999999955px;text-align:center;top:176.4px;font-size:8.5px;color:#616161">R</div>
<div class="t" style="left:0;width:17px;text-align:center;top:207.0px;font-size:8.5px;color:#616161">1</div>
<div class="t" style="left:0;width:17px;text-align:center;top:226.0px;font-size:8.5px;color:#616161">2</div>
<div class="t" style="left:0;width:17px;text-align:center;top:241.95px;font-size:8.5px;color:#616161">3</div>
<div class="t" style="left:0;width:17px;text-align:center;top:257.9px;font-size:8.5px;color:#616161">4</div>
<div class="t" style="left:0;width:17px;text-align:center;top:273.84999999999997px;font-size:8.5px;color:#616161">5</div>
<div class="t" style="left:0;width:17px;text-align:center;top:289.79999999999995px;font-size:8.5px;color:#616161">6</div>
<div class="t" style="left:0;width:17px;text-align:center;top:305.74999999999994px;font-size:8.5px;color:#616161">7</div>
<div class="t" style="left:0;width:17px;text-align:center;top:321.69999999999993px;font-size:8.5px;color:#616161">8</div>
<div class="t" style="left:0;width:17px;text-align:center;top:337.6499999999999px;font-size:8.5px;color:#616161">9</div>
<div class="t" style="left:0;width:17px;text-align:center;top:353.5999999999999px;font-size:8.5px;color:#616161">10</div>
<div class="t" style="left:0;width:17px;text-align:center;top:369.5499999999999px;font-size:8.5px;color:#616161">11</div>
<div class="t" style="left:0;width:17px;text-align:center;top:385.4999999999999px;font-size:8.5px;color:#616161">12</div>
<div class="t" style="left:0;width:17px;text-align:center;top:399.1999999999999px;font-size:8.5px;color:#616161">13</div>
<div class="t" style="left:0;width:17px;text-align:center;top:417.4999999999999px;font-size:8.5px;color:#616161">14</div>
<div class="t" style="left:0;width:17px;text-align:center;top:434.4999999999999px;font-size:8.5px;color:#217346">15</div>
<div class="t" style="left:0;width:17px;text-align:center;top:451.4999999999999px;font-size:8.5px;color:#616161">16</div>
<div class="t" style="left:0;width:17px;text-align:center;top:468.4999999999999px;font-size:8.5px;color:#616161">17</div>
<div class="t" style="left:0;width:17px;text-align:center;top:481.4999999999999px;font-size:8.5px;color:#616161">18</div>
<div class="t" style="left:0;width:17px;text-align:center;top:498.9999999999999px;font-size:8.5px;color:#616161">19</div>
<div class="a" style="left:18px;top:182px;width:446.5px;height:30.5px;background:#1f4e79"></div>
<div class="t" style="left:18px;width:446.5px;text-align:center;top:197.25px;font-size:11.5px;font-weight:bold;color:#fff">Ex 7 - Non-Adjacent Range</div>
<div class="a" style="left:18px;top:212.5px;width:446.5px;height:19.0px;background:#2e75b6"></div>
<div class="a" style="left:18px;top:212px;width:446.5px;height:1px;background:#9aabbd"></div>
<div class="a" style="left:103.5px;top:212.5px;width:1px;height:19.0px;background:#a9b8c8"></div>
<div class="t" style="left:18px;width:86px;text-align:center;top:222.0px;font-size:9px;font-weight:bold;color:#fff">Month</div>
<div class="a" style="left:190.0px;top:212.5px;width:1px;height:19.0px;background:#a9b8c8"></div>
<div class="t" style="left:104px;width:86.5px;text-align:center;top:222.0px;font-size:9px;font-weight:bold;color:#fff">Product</div>
<div class="a" style="left:276.5px;top:212.5px;width:1px;height:19.0px;background:#a9b8c8"></div>
<div class="t" style="left:190.5px;width:86.5px;text-align:center;top:222.0px;font-size:9px;font-weight:bold;color:#fff">Quantity</div>
<div class="a" style="left:363.0px;top:212.5px;width:1px;height:19.0px;background:#a9b8c8"></div>
<div class="t" style="left:277px;width:86.5px;text-align:center;top:222.0px;font-size:9px;font-weight:bold;color:#fff">Unit Price ($)</div>
<div class="t" style="left:363.5px;width:101.0px;text-align:center;top:222.0px;font-size:9px;font-weight:bold;color:#fff">Total Revenue ($)</div>
<div class="a" style="left:103.5px;top:231.5px;width:1px;height:15.949999999999989px;background:#d6d6d6"></div>
<div class="a" style="left:190.0px;top:231.5px;width:1px;height:15.949999999999989px;background:#d6d6d6"></div>
<div class="a" style="left:276.5px;top:231.5px;width:1px;height:15.949999999999989px;background:#d6d6d6"></div>
<div class="a" style="left:363.0px;top:231.5px;width:1px;height:15.949999999999989px;background:#d6d6d6"></div>
<div class="a" style="left:464.0px;top:231.5px;width:1px;height:15.949999999999989px;background:#d6d6d6"></div>
<div class="a" style="left:18px;top:246.95px;width:446.5px;height:1px;background:#d6d6d6"></div>
<div class="t" style="left:20px;top:240.45px;font-size:9px;color:#000">Jan</div>
<div class="t" style="left:106px;top:240.45px;font-size:9px;color:#000">Widget A</div>
<div class="t" style="left:192.5px;top:240.45px;font-size:9px;color:#000">150</div>
<div class="t" style="left:279px;top:240.45px;font-size:9px;color:#000">25</div>
<div class="t" style="left:365.5px;top:240.45px;font-size:9px;color:#000">$3,750</div>
<div class="a" style="left:18px;top:247.45px;width:446.5px;height:15.949999999999989px;background:#dce6f1"></div>
<div class="a" style="left:103.5px;top:247.45px;width:1px;height:15.949999999999989px;background:#d6d6d6"></div>
<div class="a" style="left:190.0px;top:247.45px;width:1px;height:15.949999999999989px;background:#d6d6d6"></div>
<div class="a" style="left:276.5px;top:247.45px;width:1px;height:15.949999999999989px;background:#d6d6d6"></div>
<div class="a" style="left:363.0px;top:247.45px;width:1px;height:15.949999999999989px;background:#d6d6d6"></div>
<div class="a" style="left:464.0px;top:247.45px;width:1px;height:15.949999999999989px;background:#d6d6d6"></div>
<div class="a" style="left:18px;top:262.9px;width:446.5px;height:1px;background:#d6d6d6"></div>
<div class="t" style="left:20px;top:256.4px;font-size:9px;color:#000">Jan</div>
<div class="t" style="left:106px;top:256.4px;font-size:9px;color:#000">Widget B</div>
<div class="t" style="left:192.5px;top:256.4px;font-size:9px;color:#000">200</div>
<div class="t" style="left:279px;top:256.4px;font-size:9px;color:#000">18</div>
<div class="t" style="left:365.5px;top:256.4px;font-size:9px;color:#000">$3,600</div>
<div class="a" style="left:103.5px;top:263.4px;width:1px;height:15.949999999999989px;background:#d6d6d6"></div>
<div class="a" style="left:190.0px;top:263.4px;width:1px;height:15.949999999999989px;background:#d6d6d6"></div>
<div class="a" style="left:276.5px;top:263.4px;width:1px;height:15.949999999999989px;background:#d6d6d6"></div>
<div class="a" style="left:363.0px;top:263.4px;width:1px;height:15.949999999999989px;background:#d6d6d6"></div>
<div class="a" style="left:464.0px;top:263.4px;width:1px;height:15.949999999999989px;background:#d6d6d6"></div>
<div class="a" style="left:18px;top:278.84999999999997px;width:446.5px;height:1px;background:#d6d6d6"></div>
<div class="t" style="left:20px;top:272.34999999999997px;font-size:9px;color:#000">Feb</div>
<div class="t" style="left:106px;top:272.34999999999997px;font-size:9px;color:#000">Widget A</div>
<div class="t" style="left:192.5px;top:272.34999999999997px;font-size:9px;color:#000">180</div>
<div class="t" style="left:279px;top:272.34999999999997px;font-size:9px;color:#000">25</div>
<div class="t" style="left:365.5px;top:272.34999999999997px;font-size:9px;color:#000">$4,500</div>
<div class="a" style="left:18px;top:279.34999999999997px;width:446.5px;height:15.949999999999989px;background:#dce6f1"></div>
<div class="a" style="left:103.5px;top:279.34999999999997px;width:1px;height:15.949999999999989px;background:#d6d6d6"></div>
<div class="a" style="left:190.0px;top:279.34999999999997px;width:1px;height:15.949999999999989px;background:#d6d6d6"></div>
<div class="a" style="left:276.5px;top:279.34999999999997px;width:1px;height:15.949999999999989px;background:#d6d6d6"></div>
<div class="a" style="left:363.0px;top:279.34999999999997px;width:1px;height:15.949999999999989px;background:#d6d6d6"></div>
<div class="a" style="left:464.0px;top:279.34999999999997px;width:1px;height:15.949999999999989px;background:#d6d6d6"></div>
<div class="a" style="left:18px;top:294.79999999999995px;width:446.5px;height:1px;background:#d6d6d6"></div>
<div class="t" style="left:20px;top:288.29999999999995px;font-size:9px;color:#000">Feb</div>
<div class="t" style="left:106px;top:288.29999999999995px;font-size:9px;color:#000">Widget C</div>
<div class="t" style="left:192.5px;top:288.29999999999995px;font-size:9px;color:#000">90</div>
<div class="t" style="left:279px;top:288.29999999999995px;font-size:9px;color:#000">45</div>
<div class="t" style="left:365.5px;top:288.29999999999995px;font-size:9px;color:#000">$4,050</div>
<div class="a" style="left:103.5px;top:295.29999999999995px;width:1px;height:15.949999999999989px;background:#d6d6d6"></div>
<div class="a" style="left:190.0px;top:295.29999999999995px;width:1px;height:15.949999999999989px;background:#d6d6d6"></div>
<div class="a" style="left:276.5px;top:295.29999999999995px;width:1px;height:15.949999999999989px;background:#d6d6d6"></div>
<div class="a" style="left:363.0px;top:295.29999999999995px;width:1px;height:15.949999999999989px;background:#d6d6d6"></div>
<div class="a" style="left:464.0px;top:295.29999999999995px;width:1px;height:15.949999999999989px;background:#d6d6d6"></div>
<div class="a" style="left:18px;top:310.74999999999994px;width:446.5px;height:1px;background:#d6d6d6"></div>
<div class="t" style="left:20px;top:304.24999999999994px;font-size:9px;color:#000">Mar</div>
<div class="t" style="left:106px;top:304.24999999999994px;font-size:9px;color:#000">Widget B</div>
<div class="t" style="left:192.5px;top:304.24999999999994px;font-size:9px;color:#000">220</div>
<div class="t" style="left:279px;top:304.24999999999994px;font-size:9px;color:#000">18</div>
<div class="t" style="left:365.5px;top:304.24999999999994px;font-size:9px;color:#000">$3,960</div>
<div class="a" style="left:18px;top:311.24999999999994px;width:446.5px;height:15.949999999999989px;background:#dce6f1"></div>
<div class="a" style="left:103.5px;top:311.24999999999994px;width:1px;height:15.949999999999989px;background:#d6d6d6"></div>
<div class="a" style="left:190.0px;top:311.24999999999994px;width:1px;height:15.949999999999989px;background:#d6d6d6"></div>
<div class="a" style="left:276.5px;top:311.24999999999994px;width:1px;height:15.949999999999989px;background:#d6d6d6"></div>
<div class="a" style="left:363.0px;top:311.24999999999994px;width:1px;height:15.949999999999989px;background:#d6d6d6"></div>
<div class="a" style="left:464.0px;top:311.24999999999994px;width:1px;height:15.949999999999989px;background:#d6d6d6"></div>
<div class="a" style="left:18px;top:326.69999999999993px;width:446.5px;height:1px;background:#d6d6d6"></div>
<div class="t" style="left:20px;top:320.19999999999993px;font-size:9px;color:#000">Mar</div>
<div class="t" style="left:106px;top:320.19999999999993px;font-size:9px;color:#000">Widget A</div>
<div class="t" style="left:192.5px;top:320.19999999999993px;font-size:9px;color:#000">160</div>
<div class="t" style="left:279px;top:320.19999999999993px;font-size:9px;color:#000">25</div>
<div class="t" style="left:365.5px;top:320.19999999999993px;font-size:9px;color:#000">$4,000</div>
<div class="a" style="left:103.5px;top:327.19999999999993px;width:1px;height:15.949999999999989px;background:#d6d6d6"></div>
<div class="a" style="left:190.0px;top:327.19999999999993px;width:1px;height:15.949999999999989px;background:#d6d6d6"></div>
<div class="a" style="left:276.5px;top:327.19999999999993px;width:1px;height:15.949999999999989px;background:#d6d6d6"></div>
<div class="a" style="left:363.0px;top:327.19999999999993px;width:1px;height:15.949999999999989px;background:#d6d6d6"></div>
<div class="a" style="left:464.0px;top:327.19999999999993px;width:1px;height:15.949999999999989px;background:#d6d6d6"></div>
<div class="a" style="left:18px;top:342.6499999999999px;width:446.5px;height:1px;background:#d6d6d6"></div>
<div class="t" style="left:20px;top:336.1499999999999px;font-size:9px;color:#000">Apr</div>
<div class="t" style="left:106px;top:336.1499999999999px;font-size:9px;color:#000">Widget C</div>
<div class="t" style="left:192.5px;top:336.1499999999999px;font-size:9px;color:#000">110</div>
<div class="t" style="left:279px;top:336.1499999999999px;font-size:9px;color:#000">45</div>
<div class="t" style="left:365.5px;top:336.1499999999999px;font-size:9px;color:#000">$4,950</div>
<div class="a" style="left:18px;top:343.1499999999999px;width:446.5px;height:15.949999999999989px;background:#dce6f1"></div>
<div class="a" style="left:103.5px;top:343.1499999999999px;width:1px;height:15.949999999999989px;background:#d6d6d6"></div>
<div class="a" style="left:190.0px;top:343.1499999999999px;width:1px;height:15.949999999999989px;background:#d6d6d6"></div>
<div class="a" style="left:276.5px;top:343.1499999999999px;width:1px;height:15.949999999999989px;background:#d6d6d6"></div>
<div class="a" style="left:363.0px;top:343.1499999999999px;width:1px;height:15.949999999999989px;background:#d6d6d6"></div>
<div class="a" style="left:464.0px;top:343.1499999999999px;width:1px;height:15.949999999999989px;background:#d6d6d6"></div>
<div class="a" style="left:18px;top:358.5999999999999px;width:446.5px;height:1px;background:#d6d6d6"></div>
<div class="t" style="left:20px;top:352.0999999999999px;font-size:9px;color:#000">Apr</div>
<div class="t" style="left:106px;top:352.0999999999999px;font-size:9px;color:#000">Widget B</div>
<div class="t" style="left:192.5px;top:352.0999999999999px;font-size:9px;color:#000">195</div>
<div class="t" style="left:279px;top:352.0999999999999px;font-size:9px;color:#000">18</div>
<div class="t" style="left:365.5px;top:352.0999999999999px;font-size:9px;color:#000">$3,510</div>
<div class="a" style="left:103.5px;top:359.0999999999999px;width:1px;height:15.949999999999989px;background:#d6d6d6"></div>
<div class="a" style="left:190.0px;top:359.0999999999999px;width:1px;height:15.949999999999989px;background:#d6d6d6"></div>
<div class="a" style="left:276.5px;top:359.0999999999999px;width:1px;height:15.949999999999989px;background:#d6d6d6"></div>
<div class="a" style="left:363.0px;top:359.0999999999999px;width:1px;height:15.949999999999989px;background:#d6d6d6"></div>
<div class="a" style="left:464.0px;top:359.0999999999999px;width:1px;height:15.949999999999989px;background:#d6d6d6"></div>
<div class="a" style="left:18px;top:374.5499999999999px;width:446.5px;height:1px;background:#d6d6d6"></div>
<div class="t" style="left:20px;top:368.0499999999999px;font-size:9px;color:#000">May</div>
<div class="t" style="left:106px;top:368.0499999999999px;font-size:9px;color:#000">Widget A</div>
<div class="t" style="left:192.5px;top:368.0499999999999px;font-size:9px;color:#000">175</div>
<div class="t" style="left:279px;top:368.0499999999999px;font-size:9px;color:#000">25</div>
<div class="t" style="left:365.5px;top:368.0499999999999px;font-size:9px;color:#000">$4,375</div>
<div class="a" style="left:18px;top:375.0499999999999px;width:446.5px;height:15.949999999999989px;background:#dce6f1"></div>
<div class="a" style="left:103.5px;top:375.0499999999999px;width:1px;height:15.949999999999989px;background:#d6d6d6"></div>
<div class="a" style="left:190.0px;top:375.0499999999999px;width:1px;height:15.949999999999989px;background:#d6d6d6"></div>
<div class="a" style="left:276.5px;top:375.0499999999999px;width:1px;height:15.949999999999989px;background:#d6d6d6"></div>
<div class="a" style="left:363.0px;top:375.0499999999999px;width:1px;height:15.949999999999989px;background:#d6d6d6"></div>
<div class="a" style="left:464.0px;top:375.0499999999999px;width:1px;height:15.949999999999989px;background:#d6d6d6"></div>
<div class="a" style="left:18px;top:390.4999999999999px;width:446.5px;height:1px;background:#d6d6d6"></div>
<div class="t" style="left:20px;top:383.9999999999999px;font-size:9px;color:#000">May</div>
<div class="t" style="left:106px;top:383.9999999999999px;font-size:9px;color:#000">Widget C</div>
<div class="t" style="left:192.5px;top:383.9999999999999px;font-size:9px;color:#000">85</div>
<div class="t" style="left:279px;top:383.9999999999999px;font-size:9px;color:#000">45</div>
<div class="t" style="left:365.5px;top:383.9999999999999px;font-size:9px;color:#000">$3,825</div>
<div class="a" style="left:18px;top:404.6999999999999px;width:446.5px;height:18.30000000000001px;background:#2e75b6"></div>
<div class="a" style="left:186.2px;top:409.2px;width:9.6px;height:9.6px;background:#fff;border-radius:1.8px"></div>
<div class="a" style="left:188px;top:410.4px;width:6px;height:1.3px;background:#2e75b6"></div>
<div class="a" style="left:190.3px;top:411.5px;width:1.8px;height:2.2px;background:#2e75b6"></div>
<div class="t" style="left:200.60px;top:413.7px;font-size:9px;color:#fff;font-weight:bold;font-family:'Liberation Sans', sans-serif;transform:scaleX(0.9564);transform-origin:0 0;">SUMIF Formula Results</div>
<div class="a" style="left:18px;top:422.9999999999999px;width:446.5px;height:17.0px;background:#e2efda"></div>
<div class="a" style="left:18px;top:439.4999999999999px;width:446.5px;height:1px;background:#c6d9bb"></div>
<div class="a" style="left:103.5px;top:422.9999999999999px;width:1px;height:17.0px;background:#c6d9bb"></div>
<div class="t" style="left:20.80px;top:432.1999999999999px;font-size:9px;color:#000;font-weight:bold;font-family:'Liberation Sans', sans-serif;transform:scaleX(0.9713);transform-origin:0 0;">Total Revenue - Wid</div>
<div class="t" style="left:106.40px;top:432.1999999999999px;font-size:9px;color:#375623;font-weight:bold;font-family:'Liberation Sans', sans-serif;transform:scaleX(0.9538);transform-origin:0 0;">$16,625</div>
<div class="a" style="left:18px;top:439.9999999999999px;width:446.5px;height:17.0px;background:#e2efda"></div>
<div class="a" style="left:18px;top:456.4999999999999px;width:446.5px;height:1px;background:#c6d9bb"></div>
<div class="a" style="left:103.5px;top:439.9999999999999px;width:1px;height:17.0px;background:#c6d9bb"></div>
<div class="t" style="left:20.80px;top:449.1999999999999px;font-size:9px;color:#000;font-weight:bold;font-family:'Liberation Sans', sans-serif;transform:scaleX(0.9713);transform-origin:0 0;">Total Revenue - Wid</div>
<div class="t" style="left:106.40px;top:449.1999999999999px;font-size:9px;color:#375623;font-weight:bold;font-family:'Liberation Sans', sans-serif;transform:scaleX(0.9688);transform-origin:0 0;">$11,070</div>
<div class="a" style="left:18px;top:456.9999999999999px;width:446.5px;height:17.0px;background:#e2efda"></div>
<div class="a" style="left:18px;top:473.4999999999999px;width:446.5px;height:1px;background:#c6d9bb"></div>
<div class="a" style="left:103.5px;top:456.9999999999999px;width:1px;height:17.0px;background:#c6d9bb"></div>
<div class="t" style="left:20.80px;top:466.1999999999999px;font-size:9px;color:#000;font-weight:bold;font-family:'Liberation Sans', sans-serif;transform:scaleX(0.9713);transform-origin:0 0;">Total Revenue - Wid</div>
<div class="t" style="left:106.40px;top:466.1999999999999px;font-size:9px;color:#375623;font-weight:bold;font-family:'Liberation Sans', sans-serif;transform:scaleX(0.9538);transform-origin:0 0;">$12,825</div>
<div class="a" style="left:103px;top:422.9999999999999px;width:362px;height:18.0px;border:1.3px solid #217346;border-bottom-width:2px"></div>
<div class="a" style="left:462.5px;top:437.9999999999999px;width:4.5px;height:4.5px;background:#217346;border:1px solid #fff"></div>
<svg style="left:22px;top:492.8px" width="7" height="8" viewBox="0 0 7 8"><circle cx="4.3" cy="2.8" r="2.2" fill="#eef4fa" stroke="#7a7a7a" stroke-width="0.8"/><path d="M2.8 4.3 L1 7.4 M3.6 5.2 L1.6 7.6" stroke="#7a7a7a" stroke-width="0.8"/></svg>
<div class="t" style="left:31.40px;top:496px;font-size:8px;color:#595959;font-weight:normal;font-style:italic;font-family:'Liberation Sans', sans-serif;transform:scaleX(0.9697);transform-origin:0 0;">Note: The sum_range doesn&#39;t have to be adjacent to the criteria range.</div>
<div class="a" style="left:1010px;top:169.5px;width:14px;height:338.5px;background:#eceef1"></div>
<div class="a" style="left:1011.8px;top:170.4px;width:10.2px;height:338.6px;background:#f8f8f8;border-radius:5px"></div>
<svg style="left:1014px;top:173px" width="6" height="5" viewBox="0 0 6 5"><path d="M0 4.5 L3 0.5 L6 4.5 Z" fill="#616161"/></svg>
<div class="a" style="left:1014.2px;top:180.8px;width:5.9px;height:296px;background:#6b6b6b;border-radius:3px"></div>
<svg style="left:1014px;top:502px" width="6" height="5" viewBox="0 0 6 5"><path d="M0 0.5 L3 4.5 L6 0.5 Z" fill="#616161"/></svg>
<div class="a" style="left:0;top:508px;width:1024px;height:20.5px;background:#e7eaed"></div>
<svg style="left:16.5px;top:514.8px" width="5" height="7.4" viewBox="0 0 5 7.4"><path d="M4.4 0.4 L0.8 3.7 L4.4 7" fill="none" stroke="#424242" stroke-width="0.9"/></svg>
<svg style="left:38.3px;top:514.8px" width="5" height="7.4" viewBox="0 0 5 7.4"><path d="M0.6 0.4 L4.2 3.7 L0.6 7" fill="none" stroke="#424242" stroke-width="0.9"/></svg>
<svg style="left:57.3px;top:516.3px" width="8.5" height="4" viewBox="0 0 8.5 4"><circle cx="1.2" cy="2" r="1.1" fill="#424242"/><circle cx="4.2" cy="2" r="1.1" fill="#424242"/><circle cx="7.2" cy="2" r="1.1" fill="#424242"/></svg>
<div class="t" style="left:81.00px;top:519.1px;font-size:9.5px;color:#424242;font-weight:normal;font-family:'Liberation Sans', sans-serif;transform:scaleX(0.9036);transform-origin:0 0;">Ex 1 - Basic SUMIF</div>
<div class="t" style="left:175.00px;top:519.1px;font-size:9.5px;color:#424242;font-weight:normal;font-family:'Liberation Sans', sans-serif;transform:scaleX(0.9430);transform-origin:0 0;">Ex 2 - Wildcard SUMIF</div>
<div class="t" style="left:285.00px;top:519.1px;font-size:9.5px;color:#424242;font-weight:normal;font-family:'Liberation Sans', sans-serif;transform:scaleX(0.9459);transform-origin:0 0;">Ex 3 - Comparison SUMIF</div>
<div class="t" style="left:409.00px;top:519.1px;font-size:9.5px;color:#424242;font-weight:normal;font-family:'Liberation Sans', sans-serif;transform:scaleX(0.9279);transform-origin:0 0;">Ex 4 - Date SUMIF</div>
<div class="t" style="left:502.00px;top:519.1px;font-size:9.5px;color:#424242;font-weight:normal;font-family:'Liberation Sans', sans-serif;transform:scaleX(0.9645);transform-origin:0 0;">Ex 5 - Blank Non-Blank</div>
<div class="t" style="left:616.00px;top:519.1px;font-size:9.5px;color:#424242;font-weight:normal;font-family:'Liberation Sans', sans-serif;transform:scaleX(0.9360);transform-origin:0 0;">Ex 6 - Not Equal SUMIF</div>
<div class="a" style="left:165.5px;top:512px;width:1px;height:13px;background:#d0d0d0"></div>
<div class="a" style="left:276px;top:512px;width:1px;height:13px;background:#d0d0d0"></div>
<div class="a" style="left:400px;top:512px;width:1px;height:13px;background:#d0d0d0"></div>
<div class="a" style="left:492px;top:512px;width:1px;height:13px;background:#d0d0d0"></div>
<div class="a" style="left:606px;top:512px;width:1px;height:13px;background:#d0d0d0"></div>
<div class="a" style="left:720px;top:512px;width:1px;height:13px;background:#d0d0d0"></div>
<div class="a" style="left:723px;top:508.3px;width:126.7px;height:19.2px;background:#fff;border-radius:5px"></div>
<div class="t" style="left:729.00px;top:517.6px;font-size:9.5px;color:#242424;font-weight:normal;-webkit-text-stroke:0.3px #242424;font-family:'Liberation Sans', sans-serif;transform:scaleX(0.9935);transform-origin:0 0;">Ex 7 - Non-Adjacent Range</div>
<div class="a" style="left:729px;top:524px;width:115px;height:1.2px;background:#217346"></div>
<div class="a" style="left:862px;top:513.5px;width:1px;height:8px;background:#c8c8c8"></div>
<svg style="left:868.5px;top:516.5px" width="8.5" height="4" viewBox="0 0 8.5 4"><circle cx="1.2" cy="2" r="1.1" fill="#424242"/><circle cx="4.2" cy="2" r="1.1" fill="#424242"/><circle cx="7.2" cy="2" r="1.1" fill="#424242"/></svg>
<svg style="left:890px;top:513.3px" width="8" height="8" viewBox="0 0 8 8"><path d="M4 0 V8 M0 4 H8" stroke="#424242" stroke-width="1"/></svg>
<div class="a" style="left:914.5px;top:514.5px;width:2px;height:2px;border-radius:50%;background:#424242"></div>
<div class="a" style="left:914.5px;top:517.5px;width:2px;height:2px;border-radius:50%;background:#424242"></div>
<div class="a" style="left:914.5px;top:520.5px;width:2px;height:2px;border-radius:50%;background:#424242"></div>
<div class="a" style="left:926.8px;top:513.4px;width:84.2px;height:11px;background:#f9f9f9;border-radius:5.5px"></div>
<svg style="left:929.7px;top:515.5px" width="4.2" height="6" viewBox="0 0 4.2 6"><path d="M4.2 0 V6 L0 3 Z" fill="#616161"/></svg>
<div class="a" style="left:937.4px;top:516.2px;width:60.3px;height:5.5px;background:#6b6b6b;border-radius:3px"></div>
<svg style="left:1003.8px;top:515.5px" width="4.2" height="6" viewBox="0 0 4.2 6"><path d="M0 0 V6 L4.2 3 Z" fill="#616161"/></svg>
<div class="a" style="left:0;top:528.5px;width:1024px;height:15.5px;background:#f3f3f3"></div>
<div class="t" style="left:7.40px;top:537.8px;font-size:7.5px;color:#424242;font-weight:normal;font-family:'Liberation Sans', sans-serif;transform:scaleX(0.8874);transform-origin:0 0;">Ready</div>
<svg style="left:40.2px;top:532.8px" width="10" height="8.6" viewBox="0 0 10 8.6"><path d="M0.5 8.1 V0.5 H9.5 V3.5" fill="none" stroke="#616161" stroke-width="0.9"/><rect x="0.5" y="0.4" width="9" height="1.6" fill="#616161"/><path d="M0.5 8.1 H3.5" stroke="#616161" stroke-width="0.9"/><circle cx="6.6" cy="5.7" r="2.5" fill="#fff" stroke="#616161" stroke-width="0.9"/><circle cx="6.6" cy="5.7" r="1" fill="#222"/></svg>
<svg style="left:61.8px;top:532.2px" width="10.5" height="10" viewBox="0 0 10.5 10"><circle cx="4" cy="1.1" r="1" fill="#616161"/><path d="M0.5 2.6 Q4 3.6 7.5 2.6" fill="none" stroke="#616161" stroke-width="1"/><path d="M2.3 3.3 V6.5 Q1.8 8.5 2.2 9.4" fill="none" stroke="#616161" stroke-width="0.9"/><path d="M5.6 3.3 V5" fill="none" stroke="#616161" stroke-width="0.9"/><path d="M4.6 7.4 L6.3 9.3 L10 5.2" fill="none" stroke="#424242" stroke-width="0.9"/></svg>
<div class="t" style="left:73.80px;top:537.8px;font-size:7.5px;color:#424242;font-weight:normal;font-family:'Liberation Sans', sans-serif;transform:scaleX(0.9362);transform-origin:0 0;">Accessibility: Good to go</div>
<div class="a" style="left:825.2px;top:529.5px;width:26.5px;height:14.5px;background:#e3e3e3"></div>
<svg style="left:833.2px;top:532px" width="10" height="9.5" viewBox="0 0 11 10"><rect x="0.5" y="0.5" width="10" height="9" fill="none" stroke="#424242" stroke-width="0.9"/><path d="M0.5 3.5 H10.5 M0.5 6.5 H10.5 M3.8 0.5 V9.5 M7.2 0.5 V9.5" stroke="#424242" stroke-width="0.8"/></svg>
<svg style="left:859px;top:531.5px" width="11" height="10" viewBox="0 0 11 10"><rect x="0.5" y="0.5" width="10" height="9" fill="none" stroke="#424242" stroke-width="0.9"/><rect x="2.5" y="2.5" width="6" height="5" fill="none" stroke="#424242" stroke-width="0.8"/></svg>
<svg style="left:886px;top:531.5px" width="11" height="10" viewBox="0 0 11 10"><path d="M0.5 9.5 V0.5 H10.5 V9.5 M0.5 6 H6 V0.5" fill="none" stroke="#424242" stroke-width="0.9"/></svg>
<div class="a" style="left:909px;top:536.5px;width:5px;height:0.9px;background:#424242"></div>
<div class="a" style="left:918px;top:536.5px;width:66px;height:0.9px;background:#8a8a8a"></div>
<div class="a" style="left:950px;top:532.5px;width:2.5px;height:8px;background:#424242;border-radius:1px"></div>
<svg style="left:986px;top:533px" width="7" height="7" viewBox="0 0 7 7"><path d="M3.5 0.5 V6.5 M0.5 3.5 H6.5" stroke="#424242" stroke-width="0.9"/></svg>
<div class="t" style="left:1001.40px;top:537.8px;font-size:7px;color:#424242;font-weight:normal;font-family:'Liberation Sans', sans-serif;transform:scaleX(0.9222);transform-origin:0 0;">100%</div>
<div class="a" style="left:0;top:544px;width:1024px;height:32px;background:linear-gradient(90deg,#e2e5e7 0%,#dee6ea 12%,#d8e8f0 28%,#d8e8f0 80%,#dce8ee 100%);border-top:0.5px solid #d0d6da"></div>
<svg style="left:313.4px;top:552.4px" width="16" height="16" viewBox="0 0 16 16"><defs><linearGradient id="wg" x1="0" y1="0" x2="1" y2="1"><stop offset="0" stop-color="#3fc6f5"/><stop offset="1" stop-color="#0a72d6"/></linearGradient></defs><rect x="0" y="0" width="7.5" height="7.5" fill="url(#wg)"/><rect x="8.3" y="0" width="7.5" height="7.5" fill="url(#wg)"/><rect x="0" y="8.3" width="7.5" height="7.5" fill="url(#wg)"/><rect x="8.3" y="8.3" width="7.5" height="7.5" fill="url(#wg)"/></svg>
<svg style="left:343.5px;top:552.5px" width="16" height="16" viewBox="0 0 16 16"><circle cx="6.7" cy="6.5" r="5.5" fill="none" stroke="#222" stroke-width="1.5"/><path d="M10.6 10.5 L14.2 14.3" stroke="#222" stroke-width="1.7" stroke-linecap="round"/></svg>
<svg style="left:372.5px;top:552px" width="17" height="16" viewBox="0 0 17 16"><rect x="4.5" y="0.5" width="12" height="10.8" rx="0.8" fill="#f4f4f4" stroke="#d0d0d0" stroke-width="0.5"/><rect x="0.5" y="4.6" width="12.3" height="10.8" rx="0.8" fill="#2a2a2a"/><rect x="4.5" y="4.6" width="8.3" height="6.7" fill="#8c8c8c"/><path d="M2 13.5 H11.5" stroke="#ddd" stroke-width="0.8" stroke-dasharray="1 0.8"/></svg>
<svg style="left:402.3px;top:552px" width="16" height="16" viewBox="0 0 16 16"><defs><linearGradient id="cp1" x1="0" y1="0" x2="0" y2="1"><stop offset="0" stop-color="#2a8cf0"/><stop offset="0.5" stop-color="#3ecf6a"/><stop offset="1" stop-color="#f5b52a"/></linearGradient><linearGradient id="cp2" x1="0" y1="0" x2="0" y2="1"><stop offset="0" stop-color="#a35cf0"/><stop offset="1" stop-color="#f0567a"/></linearGradient></defs><path d="M5 1 Q3 1 2.2 3 L0.6 9.5 Q0 13 3 13.5 L6 14 L9 4 Q9.5 1 7 1 Z" fill="url(#cp1)"/><path d="M11 15 Q13 15 13.8 13 L15.4 6.5 Q16 3 13 2.5 L10 2 L7 12 Q6.5 15 9 15 Z" fill="url(#cp2)"/><path d="M3 12.5 Q5 15 8.5 15 L10 15 L11 11 Z" fill="#f26d5b"/></svg>
<svg style="left:431px;top:552px" width="18" height="16" viewBox="0 0 18 16"><path d="M0 2 Q0 1 1 1 H6 L8 3 H17 Q18 3 18 4 V15 H0 Z" fill="#f6c443"/><rect x="0" y="6" width="18" height="9" rx="0.5" fill="#fcd86a"/><rect x="3" y="9.5" width="12" height="5.5" fill="#1f7fd6"/></svg>
<div class="a" style="left:437px;top:570.5px;width:4px;height:1.6px;border-radius:1px;background:#8a8a8a"></div>
<svg style="left:460.5px;top:552px" width="17" height="17" viewBox="0 0 17 17"><defs><linearGradient id="eg1" x1="0" y1="0" x2="1" y2="0"><stop offset="0" stop-color="#1f6fc5"/><stop offset="1" stop-color="#2b9be8"/></linearGradient><linearGradient id="eg2" x1="0" y1="0" x2="1" y2="1"><stop offset="0" stop-color="#39c2e8"/><stop offset="1" stop-color="#5ed05a"/></linearGradient></defs><circle cx="8.5" cy="8.5" r="8.2" fill="url(#eg1)"/><path d="M1.5 7 Q3 0.5 9 0.5 Q16.5 0.8 16.5 8.5 Q16.5 11.5 13 11.5 Q9.5 11.5 9.5 9 Q9.5 6 6 6 Q3 6 1.5 7 Z" fill="url(#eg2)"/><path d="M5.5 9.5 Q5.5 14 10 15 Q13 15.5 15.5 13" fill="none" stroke="#1a5aa8" stroke-width="2" opacity="0.7"/><circle cx="11.8" cy="9.2" r="2" fill="#fff" opacity="0.9"/></svg>
<svg style="left:490px;top:553px" width="17" height="17" viewBox="0 0 17 17"><circle cx="8.5" cy="8.5" r="8.2" fill="#db4437"/><path d="M8.5 8.5 L1.4 4.4 A8.2 8.2 0 0 0 8.5 16.7 Z" fill="#0f9d58"/><path d="M8.5 8.5 L8.5 16.7 A8.2 8.2 0 0 0 15.6 4.4 Z" fill="#ffcd40"/><path d="M8.5 8.5 L15.6 4.4 A8.2 8.2 0 0 0 1.4 4.4 Z" fill="#db4437"/><circle cx="8.5" cy="8.5" r="3.9" fill="#fff"/><circle cx="8.5" cy="8.5" r="3.1" fill="#1a73e8"/></svg>
<div class="a" style="left:496.5px;top:570.8px;width:4px;height:1.6px;border-radius:1px;background:#8a8a8a"></div>
<div class="a" style="left:499px;top:548px;width:10px;height:10px;border-radius:50%;background:#f4f4f4;border:0.5px solid #bbb"></div>
<div class="a" style="left:502.5px;top:550.5px;width:3px;height:5px;background:#5a8a3a;border-radius:1px"></div>
<svg style="left:519px;top:553px" width="17" height="17" viewBox="0 0 17 17"><circle cx="8.5" cy="8.5" r="8.2" fill="#db4437"/><path d="M8.5 8.5 L1.4 4.4 A8.2 8.2 0 0 0 8.5 16.7 Z" fill="#0f9d58"/><path d="M8.5 8.5 L8.5 16.7 A8.2 8.2 0 0 0 15.6 4.4 Z" fill="#ffcd40"/><path d="M8.5 8.5 L15.6 4.4 A8.2 8.2 0 0 0 1.4 4.4 Z" fill="#db4437"/><circle cx="8.5" cy="8.5" r="3.9" fill="#fff"/><circle cx="8.5" cy="8.5" r="3.1" fill="#1a73e8"/></svg>
<div class="a" style="left:525.5px;top:570.8px;width:4px;height:1.6px;border-radius:1px;background:#8a8a8a"></div>
<div class="a" style="left:528px;top:548px;width:10px;height:10px;border-radius:50%;background:#c98a3e"></div>
<svg style="left:548px;top:553px" width="17" height="17" viewBox="0 0 17 17"><circle cx="8.5" cy="8.5" r="8.2" fill="#db4437"/><path d="M8.5 8.5 L1.4 4.4 A8.2 8.2 0 0 0 8.5 16.7 Z" fill="#0f9d58"/><path d="M8.5 8.5 L8.5 16.7 A8.2 8.2 0 0 0 15.6 4.4 Z" fill="#ffcd40"/><path d="M8.5 8.5 L15.6 4.4 A8.2 8.2 0 0 0 1.4 4.4 Z" fill="#db4437"/><circle cx="8.5" cy="8.5" r="3.9" fill="#fff"/><circle cx="8.5" cy="8.5" r="3.1" fill="#1a73e8"/></svg>
<div class="a" style="left:554.5px;top:570.8px;width:4px;height:1.6px;border-radius:1px;background:#8a8a8a"></div>
<div class="a" style="left:557px;top:548px;width:10px;height:10px;border-radius:50%;background:#1f6f3a"></div>
<div class="t" style="left:560.5px;top:553px;font-size:6px;color:#fff">i</div>
<svg style="left:580px;top:551px" width="12" height="18" viewBox="0 0 12 18"><rect x="0.5" y="2" width="11" height="15" rx="1" fill="#4fb0f0"/><rect x="1.5" y="3.5" width="9" height="11" fill="#a8dcfa"/><path d="M2.5 6 H9.5 M2.5 8.5 H9.5 M2.5 11 H9.5" stroke="#2a6fb0" stroke-width="0.7"/><path d="M2 1 V3 M4 1 V3 M6 1 V3 M8 1 V3 M10 1 V3" stroke="#3a6a9a" stroke-width="0.8"/><rect x="0.5" y="15" width="11" height="2" fill="#e09a4a"/></svg>
<div class="a" style="left:583.5px;top:570.5px;width:4px;height:1.6px;border-radius:1px;background:#8a8a8a"></div>
<svg style="left:607px;top:553px" width="17" height="17" viewBox="0 0 17 17"><path d="M3 14.2 A7.3 7.3 0 1 1 5 15.4 L1 16.2 Z" fill="#fff" fill-opacity="0.15" stroke="#2aa84a" stroke-width="1.5" stroke-linejoin="round"/><path d="M5.6 5.2 Q6.3 4.6 6.8 5.3 L7.5 6.6 Q7.6 7.1 7.1 7.5 Q7.6 9 9.4 10 Q9.8 9.5 10.3 9.6 L11.6 10.3 Q12.2 10.8 11.6 11.5 Q10.6 12.5 9 11.8 Q5.8 10.3 4.9 7.2 Q4.7 6 5.6 5.2 Z" fill="#2aa84a"/></svg>
<div class="a" style="left:614.7px;top:549px;width:13.1px;height:9.6px;border-radius:5px;background:#2a7a8a"></div>
<div class="t" style="left:616.50px;top:553.8px;font-size:7px;color:#fff;font-weight:normal;font-family:'Liberation Sans', sans-serif;transform:scaleX(1.2258);transform-origin:0 0;">53</div>
<div class="a" style="left:612.5px;top:570.5px;width:4px;height:1.6px;border-radius:1px;background:#8a8a8a"></div>
<div class="a" style="left:632.2px;top:547.2px;width:22.8px;height:24.6px;border-radius:4px;background:#eef3f7"></div>
<svg style="left:636px;top:551.5px" width="16" height="17" viewBox="0 0 16 17"><rect x="3.5" y="0.5" width="12" height="15.5" rx="1.5" fill="#1d8f4a"/><rect x="3.5" y="0.5" width="6" height="4.5" rx="1" fill="#8be07a"/><rect x="9.5" y="0.5" width="6" height="4.5" rx="1" fill="#5ccf62"/><rect x="9.5" y="5" width="6" height="5" fill="#2a9e52"/><rect x="3.5" y="10" width="12" height="6" rx="1.2" fill="#176b3a"/><rect x="0" y="8" width="8" height="8" rx="1.5" fill="#107c41"/><path d="M2.3 10 L5.7 14 M5.7 10 L2.3 14" stroke="#fff" stroke-width="1.1"/></svg>
<div class="a" style="left:640px;top:570.3px;width:9.8px;height:2px;border-radius:1px;background:#2a7f9e"></div>
<svg style="left:664px;top:553px" width="18" height="17" viewBox="0 0 18 17"><circle cx="10" cy="3" r="2.5" fill="#7b83eb"/><rect x="4" y="6" width="12" height="9" rx="4" fill="#5059c9"/><rect x="0" y="5" width="9" height="9" rx="1" fill="#4b53bc"/><text x="4.5" y="12" font-size="7" font-weight="bold" fill="#fff" text-anchor="middle" font-family="Liberation Sans">T</text><circle cx="13" cy="12" r="3" fill="#e8e8ee"/></svg>
<div class="a" style="left:673px;top:547px;width:11px;height:11px;border-radius:50%;background:#2e9e44"></div>
<svg style="left:675.5px;top:550px" width="6" height="5" viewBox="0 0 6 5"><path d="M0.5 2.5 L2.2 4 L5.5 0.8" fill="none" stroke="#fff" stroke-width="0.9"/></svg>
<div class="a" style="left:670px;top:570.5px;width:4px;height:1.6px;border-radius:1px;background:#8a8a8a"></div>
<svg style="left:695px;top:553px" width="17" height="17" viewBox="0 0 17 17"><path d="M8.5 1 Q16 1 16 8 Q16 11 13 11 Q11 11 11 13 Q11 16 8 16 Q1 16 1 8.5 Q1 1 8.5 1 Z" fill="#5ab0f0"/><circle cx="5" cy="6" r="1.5" fill="#f04a4a"/><circle cx="8" cy="4" r="1.5" fill="#f5c542"/><circle cx="4.5" cy="10" r="1.5" fill="#4ad06a"/><path d="M14 3 L9 12" stroke="#b07a3a" stroke-width="1.5"/></svg>
<div class="a" style="left:701px;top:570.5px;width:4px;height:1.6px;border-radius:1px;background:#8a8a8a"></div>
<svg style="left:826px;top:557px" width="8" height="5" viewBox="0 0 8 5"><path d="M0.7 4.3 L4 1 L7.3 4.3" fill="none" stroke="#1a1a1a" stroke-width="1"/></svg>
<svg style="left:845px;top:554px" width="14" height="13" viewBox="0 0 14 13"><path d="M2.5 9 Q0 9 0.5 6.5 Q1 4.5 3 4.8 Q3.5 1.5 7 1.5 Q10 1.5 10.5 5 Q12.5 5 12.5 7 Q12.5 9 10.5 9 Z" fill="#e8e8e8" stroke="#5a5a5a" stroke-width="0.9"/><circle cx="10" cy="9.5" r="3" fill="#d83b3b"/><path d="M8.8 8.3 L11.2 10.7 M11.2 8.3 L8.8 10.7" stroke="#fff" stroke-width="0.8"/></svg>
<svg style="left:866px;top:555px" width="13" height="9" viewBox="0 0 13 9"><path d="M2.5 8.5 Q0 8.5 0.3 6 Q0.7 4 2.8 4.3 Q3.3 1 6.8 1 Q9.8 1 10.3 4.5 Q12.7 4.5 12.7 6.5 Q12.7 8.5 10.5 8.5 Z" fill="#2b7de0"/></svg>
<div class="t" style="left:890.40px;top:555.3px;font-size:8.5px;color:#1a1a1a;font-weight:normal;font-family:'Liberation Sans', sans-serif;transform:scaleX(0.8270);transform-origin:0 0;">ENG</div>
<div class="t" style="left:894.50px;top:565.4px;font-size:8.5px;color:#1a1a1a;font-weight:normal;font-family:'Liberation Sans', sans-serif;transform:scaleX(0.8824);transform-origin:0 0;">IN</div>
<svg style="left:918px;top:556px" width="10" height="8" viewBox="0 0 10 8"><path d="M0.5 3 Q5 -1 9.5 3 M2 4.8 Q5 2 8 4.8 M3.5 6.4 Q5 5 6.5 6.4" fill="none" stroke="#1a1a1a" stroke-width="0.9"/><circle cx="5" cy="7.3" r="0.7" fill="#1a1a1a"/></svg>
<svg style="left:934px;top:555px" width="10" height="10" viewBox="0 0 10 10"><path d="M0.5 3.5 H2.5 L5 1 V9 L2.5 6.5 H0.5 Z" fill="none" stroke="#1a1a1a" stroke-width="0.8"/><path d="M6.5 3.5 Q7.5 5 6.5 6.5 M8 2 Q10 5 8 8" fill="none" stroke="#1a1a1a" stroke-width="0.8"/></svg>
<svg style="left:950px;top:555px" width="14" height="10" viewBox="0 0 14 10"><rect x="0.5" y="2.5" width="12" height="7" rx="1" fill="#3a8a3a" stroke="#1a1a1a" stroke-width="0.8"/><rect x="13" y="4.5" width="1" height="3" fill="#1a1a1a"/><path d="M6.5 0.5 V5 M4.8 3.5 L6.5 5.2 L8.2 3.5" fill="none" stroke="#1a1a1a" stroke-width="0.9"/></svg>
<div class="t" style="left:977.20px;top:555.3px;font-size:8.5px;color:#1a1a1a;font-weight:normal;font-family:'Liberation Sans', sans-serif;transform:scaleX(0.9306);transform-origin:0 0;">12:48 AM</div>
<div class="t" style="left:974.60px;top:565.4px;font-size:8.5px;color:#1a1a1a;font-weight:normal;font-family:'Liberation Sans', sans-serif;transform:scaleX(0.9563);transform-origin:0 0;">2/23/2026</div>
</body></html>
